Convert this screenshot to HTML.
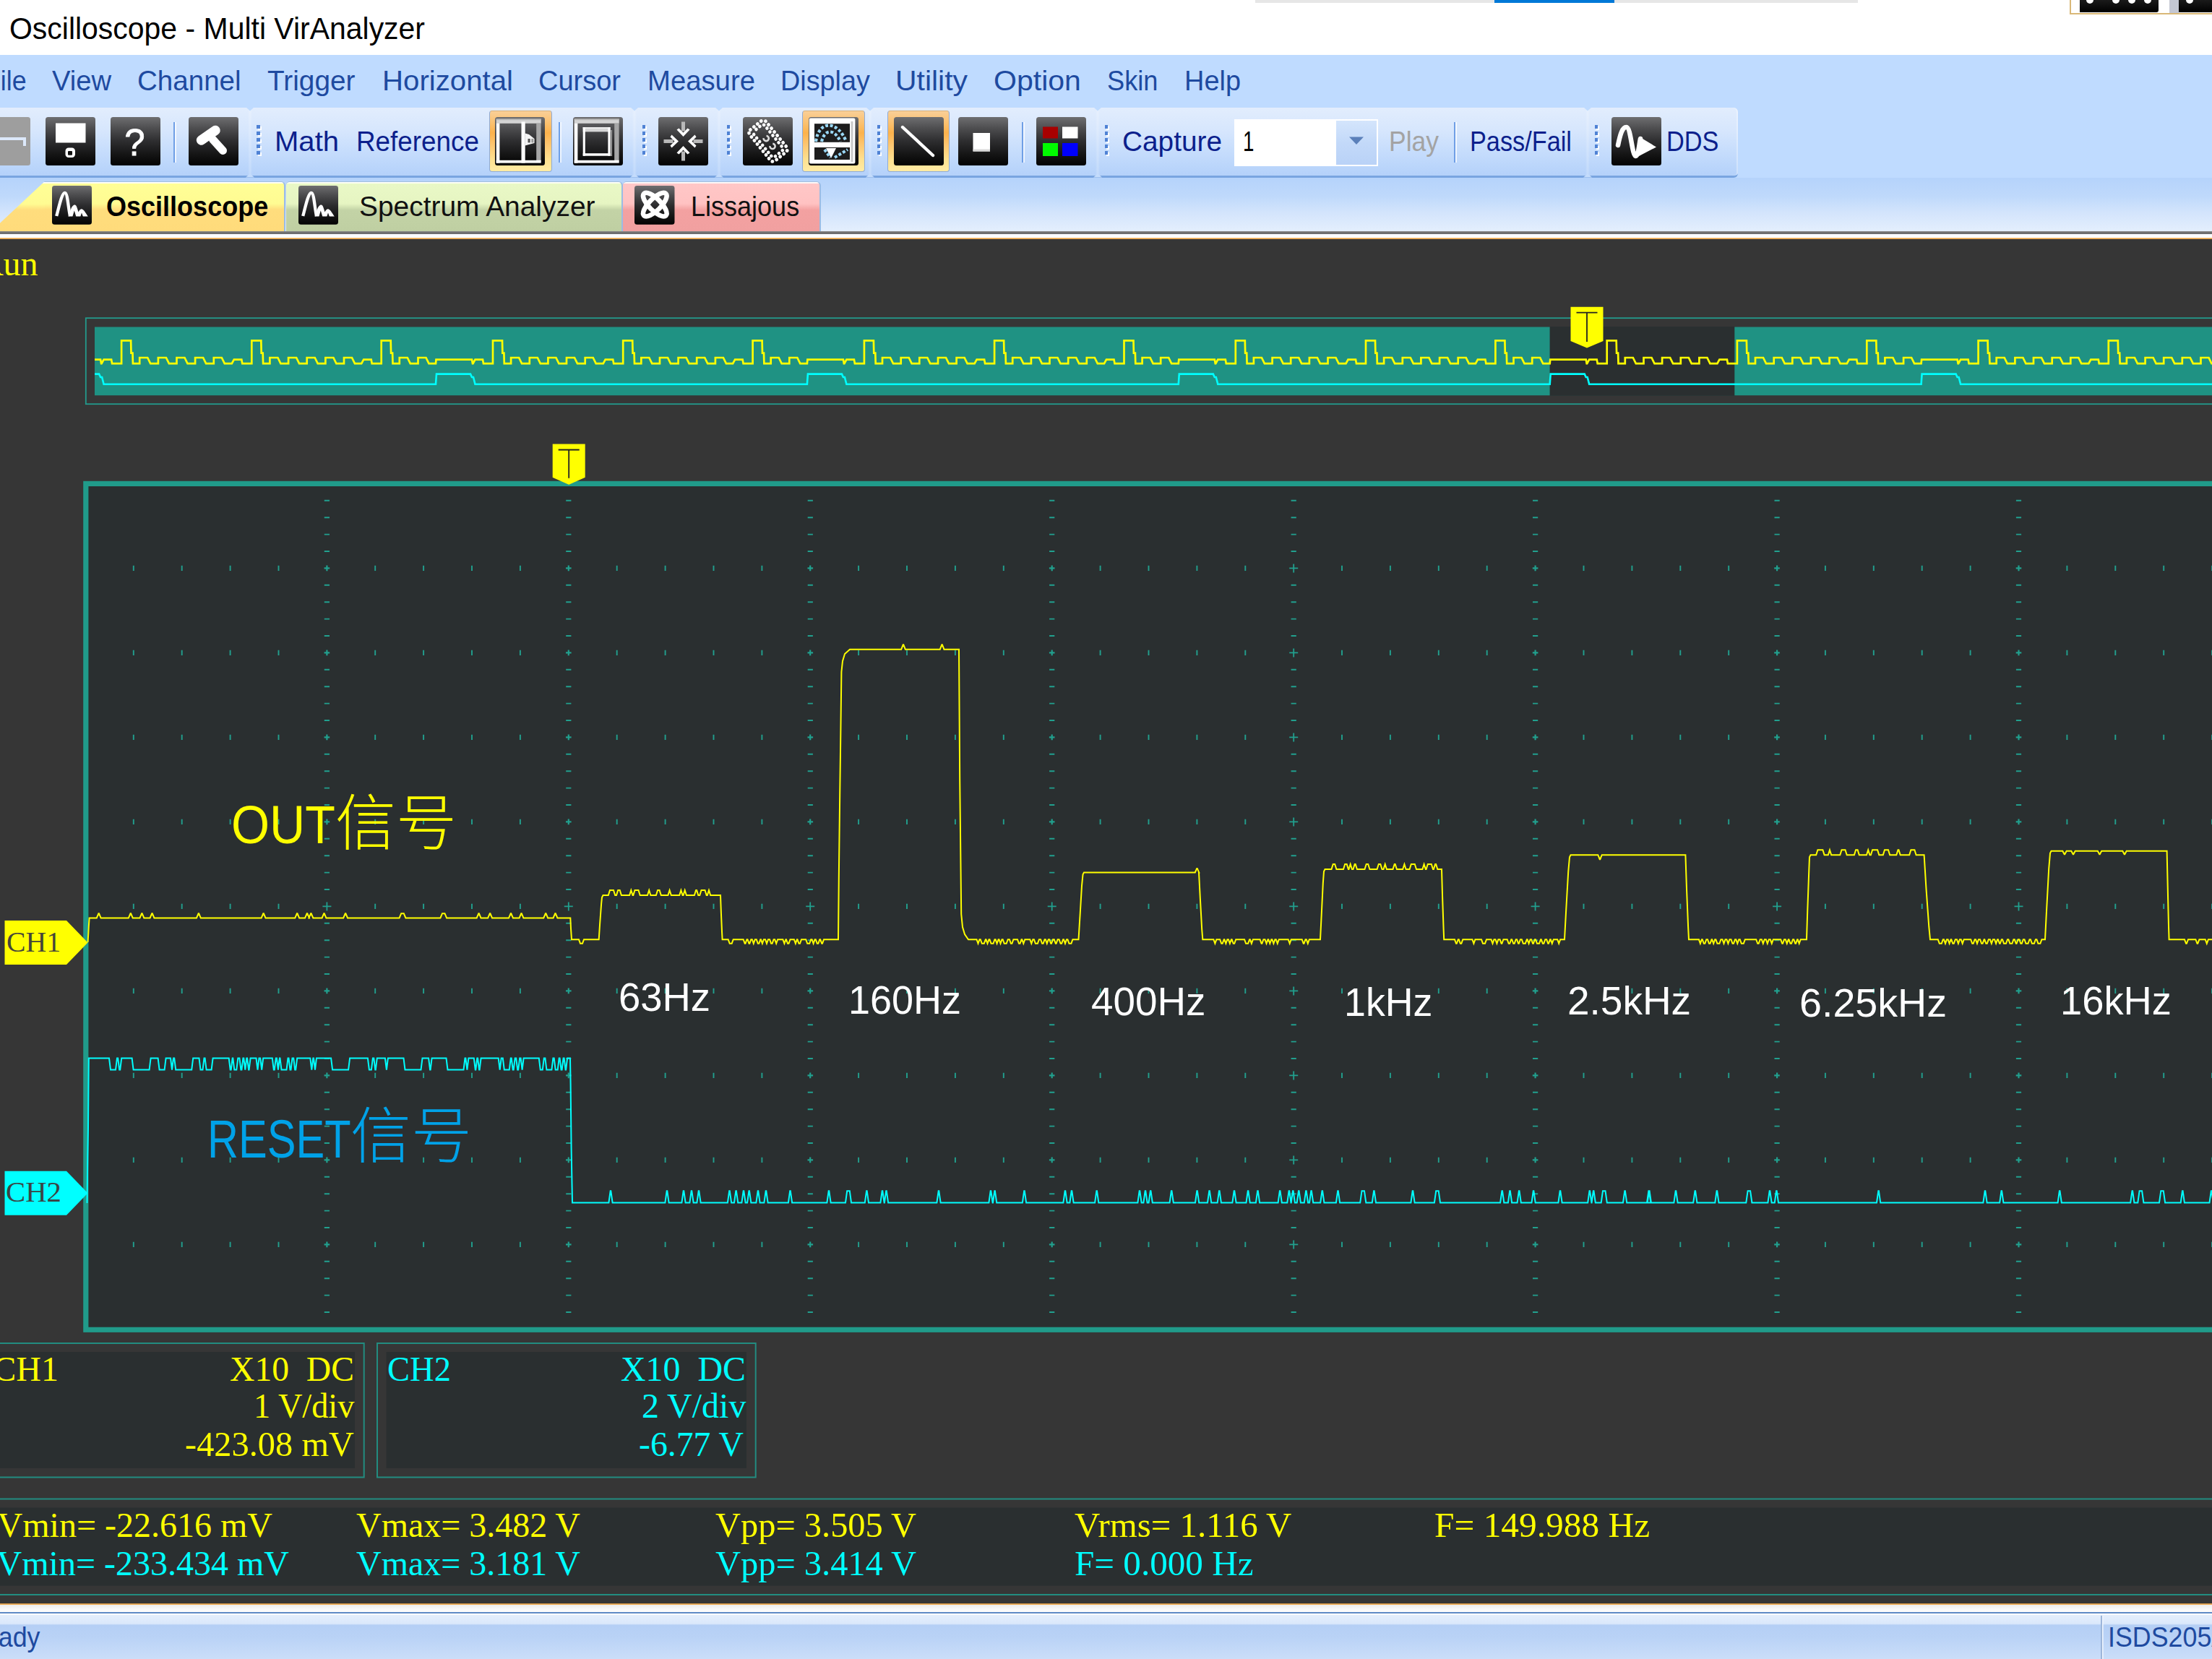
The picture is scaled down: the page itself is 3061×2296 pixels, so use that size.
<!DOCTYPE html><html><head><meta charset="utf-8"><title>Oscilloscope - Multi VirAnalyzer</title><style>
html,body{margin:0;padding:0}
body{width:3061px;height:2296px;overflow:hidden;position:relative;background:#fff;font-family:"Liberation Sans",sans-serif}
.t{position:absolute;white-space:pre;line-height:1;transform-origin:0 0;display:block}
.a{position:absolute}
.grp{position:absolute;top:148.5px;height:94px;border-radius:6px;background:linear-gradient(#e2edfd 0%,#d6e6fd 35%,#c3dbfc 70%,#b4d1fa 100%);border-bottom:3px solid #79a5e0;box-shadow:inset -2px 0 1px rgba(255,255,255,.35)}
.grip{position:absolute;top:173.3px;width:7px;height:46px}
.grip i{position:absolute;left:0;width:4.5px;height:4.5px;background:#4f82d4;box-shadow:2px 2px 0 #fff}
.hot{position:absolute;top:153px;height:85px;border-radius:4px;border:1.5px solid #8eabd8;border-top-color:#d8b078;box-sizing:border-box;background:linear-gradient(#f9cf98 0%,#fbbf6a 22%,#fcb24c 36%,#fdc56f 55%,#fee08f 80%,#ffeba4 100%)}
.sep{position:absolute;top:169px;height:56px;width:2px;background:#6f9fe6;box-shadow:2px 0 0 rgba(255,255,255,.7)}
.ico{position:absolute;width:69px;height:67px}
.tab{position:absolute;top:250.6px;height:69.8px;box-sizing:border-box;border-top:1.8px solid #a3bedb;border-right:2px solid #9bbce4;border-radius:5px 6px 0 0}
</style></head><body>
<div class="a" style="left:0;top:0;width:3061px;height:76px;background:#fff"></div>
<div class="a" style="left:1737px;top:0;width:834px;height:4px;background:#e6e6e6"></div>
<div class="a" style="left:2068px;top:0;width:166px;height:4px;background:#0078d7"></div>
<div class="a" style="left:2864px;top:-2px;width:210px;height:22px;border:2px solid #d9b878;box-sizing:border-box"></div>
<div class="a" style="left:2878px;top:0;width:109px;height:17px;background:linear-gradient(#1a1a1a,#000);border-radius:0 0 3px 0"></div>
<div class="a" style="left:3002px;top:0;width:13px;height:17.5px;background:#c3c7d2"></div>
<div class="a" style="left:3015px;top:0;width:50px;height:17px;background:linear-gradient(#1a1a1a,#000)"></div>
<div class="a" style="left:2887px;top:-5px;width:10px;height:10px;background:#fff;border-radius:3px 3px 5px 5px"></div>
<div class="a" style="left:2923px;top:-5px;width:10px;height:10px;background:#fff;border-radius:3px 3px 5px 5px"></div>
<div class="a" style="left:2944.7px;top:-5px;width:10px;height:10px;background:#fff;border-radius:3px 3px 5px 5px"></div>
<div class="a" style="left:2966.5px;top:-5px;width:10px;height:10px;background:#fff;border-radius:3px 3px 5px 5px"></div>
<div class="a" style="left:3025px;top:-5px;width:10px;height:10px;background:#fff;border-radius:3px 3px 5px 5px"></div>
<span class="t " style="left:13.00px;top:18.30px;font-size:43px;color:#000;font-family:'Liberation Sans',sans-serif;transform:scaleX(0.9523);">Oscilloscope - Multi VirAnalyzer</span>
<div class="a" style="left:0;top:76px;width:3061px;height:172px;background:#bfdbff"></div>
<div class="a" style="left:0;top:246px;width:3061px;height:74px;background:linear-gradient(#b5d3fb 0%,#bfd9fb 35%,#d3e4fc 65%,#e4effd 100%)"></div>
<span class="t " style="left:-21.14px;top:92.81px;font-size:38.5px;color:#1e4aa0;font-family:'Liberation Sans',sans-serif;transform:scaleX(0.9300);">File</span>
<span class="t " style="left:72.40px;top:92.81px;font-size:38.5px;color:#1e4aa0;font-family:'Liberation Sans',sans-serif;transform:scaleX(0.9919);">View</span>
<span class="t " style="left:190.00px;top:92.81px;font-size:38.5px;color:#1e4aa0;font-family:'Liberation Sans',sans-serif;transform:scaleX(1.0013);">Channel</span>
<span class="t " style="left:370.00px;top:92.81px;font-size:38.5px;color:#1e4aa0;font-family:'Liberation Sans',sans-serif;transform:scaleX(1.0083);">Trigger</span>
<span class="t " style="left:529.00px;top:92.81px;font-size:38.5px;color:#1e4aa0;font-family:'Liberation Sans',sans-serif;transform:scaleX(1.0442);">Horizontal</span>
<span class="t " style="left:745.00px;top:92.81px;font-size:38.5px;color:#1e4aa0;font-family:'Liberation Sans',sans-serif;transform:scaleX(0.9870);">Cursor</span>
<span class="t " style="left:895.60px;top:92.81px;font-size:38.5px;color:#1e4aa0;font-family:'Liberation Sans',sans-serif;transform:scaleX(0.9942);">Measure</span>
<span class="t " style="left:1080.00px;top:92.81px;font-size:38.5px;color:#1e4aa0;font-family:'Liberation Sans',sans-serif;transform:scaleX(0.9819);">Display</span>
<span class="t " style="left:1239.00px;top:92.81px;font-size:38.5px;color:#1e4aa0;font-family:'Liberation Sans',sans-serif;transform:scaleX(1.0623);">Utility</span>
<span class="t " style="left:1375.00px;top:92.81px;font-size:38.5px;color:#1e4aa0;font-family:'Liberation Sans',sans-serif;transform:scaleX(1.0663);">Option</span>
<span class="t " style="left:1531.50px;top:92.81px;font-size:38.5px;color:#1e4aa0;font-family:'Liberation Sans',sans-serif;transform:scaleX(0.9415);">Skin</span>
<span class="t " style="left:1638.50px;top:92.81px;font-size:38.5px;color:#1e4aa0;font-family:'Liberation Sans',sans-serif;transform:scaleX(0.9847);">Help</span>
<div class="grp" style="left:-10px;width:2414.5px"></div>
<div class="a" style="left:342.5px;top:149px;width:6px;height:94px;background:linear-gradient(90deg,rgba(255,255,255,0),rgba(255,255,255,.22) 50%,rgba(255,255,255,0))"></div>
<svg class="a" style="left:339.5px;top:148px" width="12" height="100" viewBox="0 0 12 100"><path d="M0 0 H12 L6 5.5 Z" fill="#bfdbff"/><path d="M0 97.5 L6 92.5 L12 97.5 Z" fill="#c4dcfc"/></svg>
<div class="a" style="left:874.5px;top:149px;width:6px;height:94px;background:linear-gradient(90deg,rgba(255,255,255,0),rgba(255,255,255,.22) 50%,rgba(255,255,255,0))"></div>
<svg class="a" style="left:871.5px;top:148px" width="12" height="100" viewBox="0 0 12 100"><path d="M0 0 H12 L6 5.5 Z" fill="#bfdbff"/><path d="M0 97.5 L6 92.5 L12 97.5 Z" fill="#c4dcfc"/></svg>
<div class="a" style="left:992px;top:149px;width:6px;height:94px;background:linear-gradient(90deg,rgba(255,255,255,0),rgba(255,255,255,.22) 50%,rgba(255,255,255,0))"></div>
<svg class="a" style="left:989px;top:148px" width="12" height="100" viewBox="0 0 12 100"><path d="M0 0 H12 L6 5.5 Z" fill="#bfdbff"/><path d="M0 97.5 L6 92.5 L12 97.5 Z" fill="#c4dcfc"/></svg>
<div class="a" style="left:1201px;top:149px;width:6px;height:94px;background:linear-gradient(90deg,rgba(255,255,255,0),rgba(255,255,255,.22) 50%,rgba(255,255,255,0))"></div>
<svg class="a" style="left:1198px;top:148px" width="12" height="100" viewBox="0 0 12 100"><path d="M0 0 H12 L6 5.5 Z" fill="#bfdbff"/><path d="M0 97.5 L6 92.5 L12 97.5 Z" fill="#c4dcfc"/></svg>
<div class="a" style="left:1516px;top:149px;width:6px;height:94px;background:linear-gradient(90deg,rgba(255,255,255,0),rgba(255,255,255,.22) 50%,rgba(255,255,255,0))"></div>
<svg class="a" style="left:1513px;top:148px" width="12" height="100" viewBox="0 0 12 100"><path d="M0 0 H12 L6 5.5 Z" fill="#bfdbff"/><path d="M0 97.5 L6 92.5 L12 97.5 Z" fill="#c4dcfc"/></svg>
<div class="a" style="left:2193.5px;top:149px;width:6px;height:94px;background:linear-gradient(90deg,rgba(255,255,255,0),rgba(255,255,255,.22) 50%,rgba(255,255,255,0))"></div>
<svg class="a" style="left:2190.5px;top:148px" width="12" height="100" viewBox="0 0 12 100"><path d="M0 0 H12 L6 5.5 Z" fill="#bfdbff"/><path d="M0 97.5 L6 92.5 L12 97.5 Z" fill="#c4dcfc"/></svg>
<div class="grip" style="left:355px"><i style="top:0.0px"></i><i style="top:9.0px"></i><i style="top:18.1px"></i><i style="top:27.1px"></i><i style="top:36.2px"></i></div>
<div class="grip" style="left:888.5px"><i style="top:0.0px"></i><i style="top:9.0px"></i><i style="top:18.1px"></i><i style="top:27.1px"></i><i style="top:36.2px"></i></div>
<div class="grip" style="left:1005.5px"><i style="top:0.0px"></i><i style="top:9.0px"></i><i style="top:18.1px"></i><i style="top:27.1px"></i><i style="top:36.2px"></i></div>
<div class="grip" style="left:1213.5px"><i style="top:0.0px"></i><i style="top:9.0px"></i><i style="top:18.1px"></i><i style="top:27.1px"></i><i style="top:36.2px"></i></div>
<div class="grip" style="left:1528.5px"><i style="top:0.0px"></i><i style="top:9.0px"></i><i style="top:18.1px"></i><i style="top:27.1px"></i><i style="top:36.2px"></i></div>
<div class="grip" style="left:2206.5px"><i style="top:0.0px"></i><i style="top:9.0px"></i><i style="top:18.1px"></i><i style="top:27.1px"></i><i style="top:36.2px"></i></div>
<div class="hot" style="left:676.5px;width:87.5px"></div>
<div class="hot" style="left:1109.7px;width:87.29999999999995px"></div>
<div class="hot" style="left:1228px;width:86px"></div>
<div class="sep" style="left:240px"></div>
<div class="sep" style="left:772.5px"></div>
<div class="sep" style="left:1414px"></div>
<div class="sep" style="left:2011.5px"></div>
<span class="t " style="left:380.00px;top:176.51px;font-size:38.5px;color:#0c1f8c;font-family:'Liberation Sans',sans-serif;transform:scaleX(1.0401);">Math</span>
<span class="t " style="left:493.00px;top:176.51px;font-size:38.5px;color:#0c1f8c;font-family:'Liberation Sans',sans-serif;transform:scaleX(0.9568);">Reference</span>
<span class="t " style="left:1553.00px;top:176.51px;font-size:38.5px;color:#0c1f8c;font-family:'Liberation Sans',sans-serif;transform:scaleX(1.0076);">Capture</span>
<span class="t " style="left:1922.00px;top:176.51px;font-size:38.5px;color:#a3a3a3;font-family:'Liberation Sans',sans-serif;transform:scaleX(0.9214);">Play</span>
<span class="t " style="left:2033.70px;top:176.51px;font-size:38.5px;color:#0c1f8c;font-family:'Liberation Sans',sans-serif;transform:scaleX(0.8905);">Pass/Fail</span>
<span class="t " style="left:2305.50px;top:176.51px;font-size:38.5px;color:#0c1f8c;font-family:'Liberation Sans',sans-serif;transform:scaleX(0.8914);">DDS</span>
<div class="a" style="left:1708px;top:164.5px;width:199px;height:65px;background:#fff"></div>
<div class="a" style="left:1849px;top:166.5px;width:56px;height:61px;background:linear-gradient(#d4e5fc,#c3d9f9 50%,#b9d2f7)"></div>
<svg class="a" style="left:1865px;top:188px" width="24" height="14" viewBox="0 0 24 14"><path d="M2 1.5 L22 1.5 L12 12 Z" fill="#5b80ba"/></svg>
<span class="t " style="left:1720.00px;top:176.51px;font-size:38.5px;color:#000;font-family:'Liberation Sans',sans-serif;transform:scaleX(0.7200);">1</span>
<svg width="0" height="0" style="position:absolute"><defs>
<linearGradient id="ig" x1="0" y1="0" x2="0" y2="1"><stop offset="0" stop-color="#6e6e70"/><stop offset=".25" stop-color="#4b4b4d"/><stop offset=".5" stop-color="#2d2d2f"/><stop offset=".78" stop-color="#141414"/><stop offset="1" stop-color="#030303"/></linearGradient>
<linearGradient id="igg" x1="0" y1="0" x2="0" y2="1"><stop offset="0" stop-color="#a2a2a2"/><stop offset="1" stop-color="#9a9a9a"/></linearGradient>
</defs></svg>
<svg class="a" style="left:-27.5px;top:162px" width="69" height="67" viewBox="0 0 69 67"><rect x="0" y="0" width="69" height="67" rx="3.5" fill="#9e9e9e"/><path d="M22 30 H61 V40" fill="none" stroke="#dce8fa" stroke-width="4"/><path d="M22 22 V30" stroke="#dce8fa" stroke-width="4"/></svg>
<svg class="a" style="left:62.5px;top:162px" width="69" height="67" viewBox="0 0 69 67"><rect x="0" y="0" width="69" height="67" rx="3.5" fill="url(#ig)"/><rect x="14" y="8.5" width="41.5" height="27" fill="#fff"/><rect x="27.5" y="42.5" width="13.5" height="13.5" rx="4.5" fill="#fff"/><rect x="31" y="47" width="6" height="5.8" rx="1" fill="#111"/></svg>
<svg class="a" style="left:153px;top:162px" width="69" height="67" viewBox="0 0 69 67"><rect x="0" y="0" width="69" height="67" rx="3.5" fill="url(#ig)"/><text x="33.5" y="53" font-family="Liberation Sans,sans-serif" font-size="51" fill="#fff" stroke="#fff" stroke-width="0.8" text-anchor="middle">?</text></svg>
<svg class="a" style="left:261px;top:162px" width="69" height="67" viewBox="0 0 69 67"><rect x="0" y="0" width="69" height="67" rx="3.5" fill="url(#ig)"/><path d="M17.5 32 L37 18.5" stroke="#fff" stroke-width="13.5" stroke-linecap="round"/><path d="M13 36 L24 36 L20 28 Z" fill="#fff"/><path d="M33.5 31 L47.5 46.5" stroke="#fff" stroke-width="11" stroke-linecap="round"/></svg>
<svg class="a" style="left:685.3px;top:162px" width="69" height="67" viewBox="0 0 69 67"><rect x="0" y="0" width="69" height="67" rx="3.5" fill="url(#ig)"/><rect x="1.7" y="2.6" width="62" height="6.2" fill="#d4d4d4"/><rect x="1.7" y="2.6" width="62" height="1.6" fill="#b9b9b9"/><rect x="57.2" y="8.6" width="6.4" height="52" fill="#a6a6a6"/><rect x="1.7" y="8.6" width="4.7" height="55" fill="#fff"/><rect x="1.7" y="59.8" width="62" height="3.8" fill="#fff"/><rect x="36.5" y="6.5" width="5.2" height="57" fill="#fff"/><path d="M41.5 22.5 L47 24 L54.5 30 V36 L47 38 L41.5 39.5 Z" fill="#f4f4f4"/><rect x="45.5" y="30" width="3.2" height="5.4" fill="#555"/><rect x="50.3" y="30" width="3" height="5.4" fill="#999"/></svg>
<svg class="a" style="left:793.3px;top:162px" width="69" height="67" viewBox="0 0 69 67"><rect x="0" y="0" width="69" height="67" rx="3.5" fill="url(#ig)"/><rect x="1.7" y="2.6" width="62" height="6.2" fill="#d4d4d4"/><rect x="1.7" y="2.6" width="62" height="1.6" fill="#b9b9b9"/><rect x="57.2" y="8.6" width="6.4" height="52" fill="#a6a6a6"/><rect x="1.7" y="8.6" width="4.7" height="55" fill="#fff"/><rect x="1.7" y="59.8" width="62" height="3.8" fill="#fff"/><rect x="51.5" y="18" width="2.6" height="36" fill="#8f8f8f"/><rect x="13.7" y="14.2" width="37.8" height="6.2" fill="#d6d6d6"/><rect x="13.7" y="14.2" width="37.8" height="1.6" fill="#f4f4f4"/><rect x="13.7" y="14.2" width="3.1" height="39.5" fill="#fff"/><rect x="48.4" y="14.2" width="3.1" height="39.5" fill="#fff"/><rect x="13.7" y="50.2" width="37.8" height="3.5" fill="#fff"/></svg>
<svg class="a" style="left:911px;top:162px" width="69" height="67" viewBox="0 0 69 67"><rect x="0" y="0" width="69" height="67" rx="3.5" fill="url(#ig)"/><g transform="rotate(0 34.5 33.5)"><rect x="32" y="6.5" width="5" height="13" fill="#b9b9b9"/><path d="M25.5 17.5 L34.5 27 L43.5 17.5 L40.5 15.5 L34.5 21.5 L28.5 15.5 Z" fill="#fff"/></g><g transform="rotate(90 34.5 33.5)"><rect x="32" y="6.5" width="5" height="13" fill="#b9b9b9"/><path d="M25.5 17.5 L34.5 27 L43.5 17.5 L40.5 15.5 L34.5 21.5 L28.5 15.5 Z" fill="#fff"/></g><g transform="rotate(180 34.5 33.5)"><rect x="32" y="6.5" width="5" height="13" fill="#b9b9b9"/><path d="M25.5 17.5 L34.5 27 L43.5 17.5 L40.5 15.5 L34.5 21.5 L28.5 15.5 Z" fill="#fff"/></g><g transform="rotate(270 34.5 33.5)"><rect x="32" y="6.5" width="5" height="13" fill="#b9b9b9"/><path d="M25.5 17.5 L34.5 27 L43.5 17.5 L40.5 15.5 L34.5 21.5 L28.5 15.5 Z" fill="#fff"/></g></svg>
<svg class="a" style="left:1028px;top:162px" width="69" height="67" viewBox="0 0 69 67"><rect x="0" y="0" width="69" height="67" rx="3.5" fill="url(#ig)"/><g transform="translate(35 33) rotate(-39)" fill="none" stroke="#fff"><rect x="-14.5" y="-27.5" width="29" height="55" rx="5" stroke-width="4.8" stroke-dasharray="0.1 6.3" stroke-linecap="round"/><rect x="-9.8" y="-22.8" width="19.6" height="45.6" rx="3.5" stroke-width="4.6" stroke-dasharray="0.1 6.3" stroke-dashoffset="3" stroke-linecap="round"/><path d="M-2.5 -7 a3.6 3.6 0 1 0 5 0 M-2.5 7 a3.6 3.6 0 1 0 5 0" stroke-width="2.6" stroke="#ddd"/></g></svg>
<svg class="a" style="left:1119px;top:162px" width="69" height="67" viewBox="0 0 69 67"><rect x="0" y="0" width="69" height="67" rx="3.5" fill="url(#ig)"/><rect x="0.8" y="1.5" width="63.6" height="63" rx="2" fill="#fff"/><rect x="58.5" y="6" width="3" height="56" fill="#c9c9c9"/><rect x="8" y="9.2" width="49" height="25.6" fill="#1d1d1d"/><rect x="8" y="42" width="49" height="17" fill="#1d1d1d"/><path d="M10 34 C14 4 40 4 52 34 M18 34 C22 16 36 16 44 34" fill="none" stroke="#9ad8f6" stroke-width="4.2" stroke-dasharray="4 2.6"/><path d="M24 43 L31 57 L38 43 Z" fill="#fff"/><path d="M36 56 L54 45 M22 45 L30 56" stroke="#9ad8f6" stroke-width="4" stroke-dasharray="4 2.5"/></svg>
<svg class="a" style="left:1236.5px;top:162px" width="69" height="67" viewBox="0 0 69 67"><rect x="0" y="0" width="69" height="67" rx="3.5" fill="url(#ig)"/><path d="M12 14 L54 53" stroke="#fff" stroke-width="4.4" stroke-linecap="round"/></svg>
<svg class="a" style="left:1326px;top:162px" width="69" height="67" viewBox="0 0 69 67"><rect x="0" y="0" width="69" height="67" rx="3.5" fill="url(#ig)"/><rect x="20.5" y="22" width="23.5" height="25.5" fill="#fff"/><rect x="20.5" y="44.5" width="23.5" height="3" fill="#d9d9d9"/></svg>
<svg class="a" style="left:1434px;top:162px" width="69" height="67" viewBox="0 0 69 67"><rect x="0" y="0" width="69" height="67" rx="3.5" fill="url(#ig)"/><rect x="9" y="13.5" width="21" height="16" fill="#a80000"/><rect x="36" y="13.5" width="21.5" height="16" fill="#fff"/><rect x="9" y="36" width="21" height="18" fill="#00fb00"/><rect x="36" y="36" width="21.5" height="18" fill="#0000fd"/></svg>
<svg class="a" style="left:2229.5px;top:162px" width="69" height="67" viewBox="0 0 69 67"><rect x="0" y="0" width="69" height="67" rx="3.5" fill="url(#ig)"/><path d="M9 39 C12 24 15 14 20.5 14 C27 14 28 52 33.5 54 C37 54 38 40 40 30" fill="none" stroke="#fff" stroke-width="6.5" stroke-linecap="round"/><path d="M38 27 L62 41.5 L38 54 Z" fill="#fff"/></svg>
<div class="tab" style="left:-13px;width:200px;background:linear-gradient(#fff 0,#fffff0 1.6px,#fffe96 2px,#fffb92 44%,#ffdd7d 56%,#ffdb7b 100%);transform:skewX(-47deg);transform-origin:0 100%;border-radius:0;border-right:none"></div>
<div class="tab" style="left:62px;width:333px;background:linear-gradient(#fff 0,#fffff0 1.6px,#fffe96 2px,#fffb92 44%,#ffdd7d 56%,#ffdb7b 100%);border-left:none;border-radius:0 6px 0 0"></div>
<div class="tab" style="left:396px;width:466px;background:linear-gradient(#fff 0,#fbfff0 1.6px,#e9f8c6 2px,#e6f5c2 44%,#c3d3a6 57%,#bfcfa2 100%)"></div>
<div class="tab" style="left:862px;width:273.5px;background:linear-gradient(#fff 0,#fff4f4 1.6px,#ffc7c7 2px,#ffc2c2 44%,#f3a1a1 57%,#f1a0a0 100%)"></div>
<svg class="a" style="left:72px;top:257px" width="55" height="53.7" viewBox="0 0 55 53.7"><rect x="0" y="0" width="55" height="53.7" rx="3.5" fill="url(#ig)"/><path d="M6.2 42 C9.5 30 13.5 9.8 17.8 9.8 C21.5 9.8 22.5 31 25 42" fill="none" stroke="#fff" stroke-width="4.3" stroke-linecap="butt" stroke-linejoin="round"/><path d="M22.5 42.6 L25.5 34 C27.5 28 30 26 31.8 26.5 C34.3 27.2 35.3 33 36.6 36.5 C38 33 40 32 41.6 32.4 C44.2 33.2 47 38 49.8 42.6 Z" fill="#fff"/><path d="M28.3 43 L30.8 34.5 L33.4 43 Z M39.2 43 L41 37.5 L43 43 Z" fill="#1c1c1c"/></svg>
<svg class="a" style="left:413px;top:257px" width="55" height="53.7" viewBox="0 0 55 53.7"><rect x="0" y="0" width="55" height="53.7" rx="3.5" fill="url(#ig)"/><path d="M6.2 42 C9.5 30 13.5 9.8 17.8 9.8 C21.5 9.8 22.5 31 25 42" fill="none" stroke="#fff" stroke-width="4.3" stroke-linecap="butt" stroke-linejoin="round"/><path d="M22.5 42.6 L25.5 34 C27.5 28 30 26 31.8 26.5 C34.3 27.2 35.3 33 36.6 36.5 C38 33 40 32 41.6 32.4 C44.2 33.2 47 38 49.8 42.6 Z" fill="#fff"/><path d="M28.3 43 L30.8 34.5 L33.4 43 Z M39.2 43 L41 37.5 L43 43 Z" fill="#1c1c1c"/></svg>
<svg class="a" style="left:878px;top:257px" width="55.5" height="53.7" viewBox="0 0 55.5 53.7"><rect x="0" y="0" width="55.5" height="53.7" rx="3.5" fill="url(#ig)"/><g fill="none" stroke="#fff" stroke-width="6.6"><ellipse cx="28.3" cy="26.2" rx="21.5" ry="8.2" transform="rotate(45 28.3 26.2)"/><ellipse cx="28.3" cy="26.2" rx="21.5" ry="8.2" transform="rotate(-45 28.3 26.2)"/></g></svg>
<span class="t " style="left:146.50px;top:266.81px;font-size:38.5px;color:#000;font-family:'Liberation Sans',sans-serif;transform:scaleX(0.9355);font-weight:bold;">Oscilloscope</span>
<span class="t " style="left:496.50px;top:266.81px;font-size:38.5px;color:#111;font-family:'Liberation Sans',sans-serif;transform:scaleX(1.0105);">Spectrum Analyzer</span>
<span class="t " style="left:955.80px;top:266.81px;font-size:38.5px;color:#111;font-family:'Liberation Sans',sans-serif;transform:scaleX(0.9356);">Lissajous</span>
<div class="a" style="left:0;top:320.3px;width:3061px;height:4px;background:linear-gradient(#8d8d8d,#6b6b6b 50%,#707070)"></div>
<div class="a" style="left:0;top:324px;width:3061px;height:5px;background:#fbfcff"></div>
<div class="a" style="left:0;top:328.5px;width:3061px;height:2.8px;background:linear-gradient(#fdd9a0,#fbb04e 50%,#c08a44)"></div>
<div class="a" style="left:0;top:331px;width:3061px;height:1888px;background:#363636"></div>
<svg class="a" style="left:0;top:0" width="3061" height="2296" viewBox="0 0 3061 2296" shape-rendering="auto">
<rect x="118.8" y="440.2" width="3000" height="119" fill="none" stroke="#239a8c" stroke-width="1.8"/>
<rect x="131" y="452.5" width="2940" height="94.7" fill="#1f9283"/>
<rect x="2144.6" y="452" width="255.7" height="95.7" fill="#2a2f30"/>
<clipPath id="ovc"><rect x="131" y="452.5" width="2940" height="94.7"/></clipPath>
<g clip-path="url(#ovc)">
<path d="M-424.8 503.2 L-424.3 497.6 L-374.8 497.6 L-373.8 503.2 L-373.3 503.2 L-370.3 497.6 L-359.8 497.6 L-358.8 503.2 L-345.8 503.2 L-345.8 471.3 L-332.8 471.3 L-332.4 488.7 L-330.4 488.7 L-330.0 503.2 L-320.7 503.2 L-320.7 495.0 L-309.7 495.0 L-305.7 503.2 L-295.0 503.2 L-295.0 495.0 L-284.0 495.0 L-280.0 503.2 L-269.4 503.2 L-269.4 495.0 L-258.4 495.0 L-254.4 503.2 L-243.7 503.2 L-243.7 495.0 L-232.7 495.0 L-228.7 503.2 L-218.1 503.2 L-218.1 495.0 L-207.1 495.0 L-203.1 503.2 L-193.1 503.2 L-190.1 497.6 L-179.6 497.6 L-178.6 503.2 L-165.6 503.2 L-165.6 471.3 L-152.6 471.3 L-152.2 488.7 L-150.2 488.7 L-149.8 503.2 L-140.5 503.2 L-140.5 495.0 L-129.5 495.0 L-125.5 503.2 L-114.8 503.2 L-114.8 495.0 L-103.8 495.0 L-99.8 503.2 L-89.2 503.2 L-89.2 495.0 L-78.2 495.0 L-74.2 503.2 L-63.5 503.2 L-63.5 495.0 L-52.5 495.0 L-48.5 503.2 L-37.9 503.2 L-37.9 495.0 L-26.9 495.0 L-22.9 503.2 L-13.7 503.2 L-10.7 497.6 L-0.2 497.6 L0.8 503.2 L13.8 503.2 L13.8 471.3 L26.8 471.3 L27.2 488.7 L29.2 488.7 L29.6 503.2 L38.9 503.2 L38.9 495.0 L49.9 495.0 L53.9 503.2 L64.6 503.2 L64.6 495.0 L75.6 495.0 L79.6 503.2 L89.1 503.2 L89.1 503.2 L89.6 497.6 L139.1 497.6 L140.1 503.2 L140.6 503.2 L143.6 497.6 L154.1 497.6 L155.1 503.2 L168.1 503.2 L168.1 471.3 L181.1 471.3 L181.5 488.7 L183.5 488.7 L183.9 503.2 L193.2 503.2 L193.2 495.0 L204.2 495.0 L208.2 503.2 L218.9 503.2 L218.9 495.0 L229.9 495.0 L233.9 503.2 L244.5 503.2 L244.5 495.0 L255.5 495.0 L259.5 503.2 L270.1 503.2 L270.1 495.0 L281.1 495.0 L285.1 503.2 L295.8 503.2 L295.8 495.0 L306.8 495.0 L310.8 503.2 L320.8 503.2 L323.8 497.6 L334.3 497.6 L335.3 503.2 L348.3 503.2 L348.3 471.3 L361.3 471.3 L361.7 488.7 L363.7 488.7 L364.1 503.2 L373.4 503.2 L373.4 495.0 L384.4 495.0 L388.4 503.2 L399.1 503.2 L399.1 495.0 L410.1 495.0 L414.1 503.2 L424.7 503.2 L424.7 495.0 L435.7 495.0 L439.7 503.2 L450.4 503.2 L450.4 495.0 L461.4 495.0 L465.4 503.2 L476.0 503.2 L476.0 495.0 L487.0 495.0 L491.0 503.2 L500.2 503.2 L503.2 497.6 L513.7 497.6 L514.7 503.2 L527.7 503.2 L527.7 471.3 L540.7 471.3 L541.1 488.7 L543.1 488.7 L543.5 503.2 L552.8 503.2 L552.8 495.0 L563.8 495.0 L567.8 503.2 L578.5 503.2 L578.5 495.0 L589.5 495.0 L593.5 503.2 L603.0 503.2 L603.0 503.2 L603.5 497.6 L653.0 497.6 L654.0 503.2 L654.5 503.2 L657.5 497.6 L668.0 497.6 L669.0 503.2 L682.0 503.2 L682.0 471.3 L695.0 471.3 L695.4 488.7 L697.4 488.7 L697.8 503.2 L707.1 503.2 L707.1 495.0 L718.1 495.0 L722.1 503.2 L732.8 503.2 L732.8 495.0 L743.8 495.0 L747.8 503.2 L758.4 503.2 L758.4 495.0 L769.4 495.0 L773.4 503.2 L784.0 503.2 L784.0 495.0 L795.0 495.0 L799.0 503.2 L809.7 503.2 L809.7 495.0 L820.7 495.0 L824.7 503.2 L834.7 503.2 L837.7 497.6 L848.2 497.6 L849.2 503.2 L862.2 503.2 L862.2 471.3 L875.2 471.3 L875.6 488.7 L877.6 488.7 L878.0 503.2 L887.3 503.2 L887.3 495.0 L898.3 495.0 L902.3 503.2 L913.0 503.2 L913.0 495.0 L924.0 495.0 L928.0 503.2 L938.6 503.2 L938.6 495.0 L949.6 495.0 L953.6 503.2 L964.2 503.2 L964.2 495.0 L975.2 495.0 L979.2 503.2 L989.9 503.2 L989.9 495.0 L1000.9 495.0 L1004.9 503.2 L1014.1 503.2 L1017.1 497.6 L1027.6 497.6 L1028.6 503.2 L1041.6 503.2 L1041.6 471.3 L1054.6 471.3 L1055.0 488.7 L1057.0 488.7 L1057.4 503.2 L1066.7 503.2 L1066.7 495.0 L1077.7 495.0 L1081.7 503.2 L1092.3 503.2 L1092.3 495.0 L1103.3 495.0 L1107.3 503.2 L1116.9 503.2 L1116.9 503.2 L1117.4 497.6 L1166.9 497.6 L1167.9 503.2 L1168.4 503.2 L1171.4 497.6 L1181.9 497.6 L1182.9 503.2 L1195.9 503.2 L1195.9 471.3 L1208.9 471.3 L1209.3 488.7 L1211.3 488.7 L1211.7 503.2 L1221.0 503.2 L1221.0 495.0 L1232.0 495.0 L1236.0 503.2 L1246.7 503.2 L1246.7 495.0 L1257.7 495.0 L1261.7 503.2 L1272.3 503.2 L1272.3 495.0 L1283.3 495.0 L1287.3 503.2 L1298.0 503.2 L1298.0 495.0 L1309.0 495.0 L1313.0 503.2 L1323.6 503.2 L1323.6 495.0 L1334.6 495.0 L1338.6 503.2 L1348.6 503.2 L1351.6 497.6 L1362.1 497.6 L1363.1 503.2 L1376.1 503.2 L1376.1 471.3 L1389.1 471.3 L1389.5 488.7 L1391.5 488.7 L1391.9 503.2 L1401.2 503.2 L1401.2 495.0 L1412.2 495.0 L1416.2 503.2 L1426.9 503.2 L1426.9 495.0 L1437.9 495.0 L1441.9 503.2 L1452.5 503.2 L1452.5 495.0 L1463.5 495.0 L1467.5 503.2 L1478.2 503.2 L1478.2 495.0 L1489.2 495.0 L1493.2 503.2 L1503.8 503.2 L1503.8 495.0 L1514.8 495.0 L1518.8 503.2 L1528.0 503.2 L1531.0 497.6 L1541.5 497.6 L1542.5 503.2 L1555.5 503.2 L1555.5 471.3 L1568.5 471.3 L1568.9 488.7 L1570.9 488.7 L1571.3 503.2 L1580.6 503.2 L1580.6 495.0 L1591.6 495.0 L1595.6 503.2 L1606.2 503.2 L1606.2 495.0 L1617.2 495.0 L1621.2 503.2 L1630.8 503.2 L1630.8 503.2 L1631.3 497.6 L1680.8 497.6 L1681.8 503.2 L1682.3 503.2 L1685.3 497.6 L1695.8 497.6 L1696.8 503.2 L1709.8 503.2 L1709.8 471.3 L1722.8 471.3 L1723.2 488.7 L1725.2 488.7 L1725.6 503.2 L1734.9 503.2 L1734.9 495.0 L1745.9 495.0 L1749.9 503.2 L1760.6 503.2 L1760.6 495.0 L1771.6 495.0 L1775.6 503.2 L1786.2 503.2 L1786.2 495.0 L1797.2 495.0 L1801.2 503.2 L1811.9 503.2 L1811.9 495.0 L1822.9 495.0 L1826.9 503.2 L1837.5 503.2 L1837.5 495.0 L1848.5 495.0 L1852.5 503.2 L1862.5 503.2 L1865.5 497.6 L1876.0 497.6 L1877.0 503.2 L1890.0 503.2 L1890.0 471.3 L1903.0 471.3 L1903.4 488.7 L1905.4 488.7 L1905.8 503.2 L1915.1 503.2 L1915.1 495.0 L1926.1 495.0 L1930.1 503.2 L1940.8 503.2 L1940.8 495.0 L1951.8 495.0 L1955.8 503.2 L1966.4 503.2 L1966.4 495.0 L1977.4 495.0 L1981.4 503.2 L1992.1 503.2 L1992.1 495.0 L2003.1 495.0 L2007.1 503.2 L2017.7 503.2 L2017.7 495.0 L2028.7 495.0 L2032.7 503.2 L2041.9 503.2 L2044.9 497.6 L2055.4 497.6 L2056.4 503.2 L2069.4 503.2 L2069.4 471.3 L2082.4 471.3 L2082.8 488.7 L2084.8 488.7 L2085.2 503.2 L2094.5 503.2 L2094.5 495.0 L2105.5 495.0 L2109.5 503.2 L2120.2 503.2 L2120.2 495.0 L2131.2 495.0 L2135.2 503.2 L2144.7 503.2 L2144.7 503.2 L2145.2 497.6 L2194.7 497.6 L2195.7 503.2 L2196.2 503.2 L2199.2 497.6 L2209.7 497.6 L2210.7 503.2 L2223.7 503.2 L2223.7 471.3 L2236.7 471.3 L2237.1 488.7 L2239.1 488.7 L2239.5 503.2 L2248.8 503.2 L2248.8 495.0 L2259.8 495.0 L2263.8 503.2 L2274.5 503.2 L2274.5 495.0 L2285.5 495.0 L2289.5 503.2 L2300.1 503.2 L2300.1 495.0 L2311.1 495.0 L2315.1 503.2 L2325.8 503.2 L2325.8 495.0 L2336.8 495.0 L2340.8 503.2 L2351.4 503.2 L2351.4 495.0 L2362.4 495.0 L2366.4 503.2 L2376.4 503.2 L2379.4 497.6 L2389.9 497.6 L2390.9 503.2 L2403.9 503.2 L2403.9 471.3 L2416.9 471.3 L2417.3 488.7 L2419.3 488.7 L2419.7 503.2 L2429.0 503.2 L2429.0 495.0 L2440.0 495.0 L2444.0 503.2 L2454.7 503.2 L2454.7 495.0 L2465.7 495.0 L2469.7 503.2 L2480.3 503.2 L2480.3 495.0 L2491.3 495.0 L2495.3 503.2 L2505.9 503.2 L2505.9 495.0 L2516.9 495.0 L2520.9 503.2 L2531.6 503.2 L2531.6 495.0 L2542.6 495.0 L2546.6 503.2 L2555.8 503.2 L2558.8 497.6 L2569.3 497.6 L2570.3 503.2 L2583.3 503.2 L2583.3 471.3 L2596.3 471.3 L2596.7 488.7 L2598.7 488.7 L2599.1 503.2 L2608.4 503.2 L2608.4 495.0 L2619.4 495.0 L2623.4 503.2 L2634.1 503.2 L2634.1 495.0 L2645.1 495.0 L2649.1 503.2 L2658.6 503.2 L2658.6 503.2 L2659.1 497.6 L2708.6 497.6 L2709.6 503.2 L2710.1 503.2 L2713.1 497.6 L2723.6 497.6 L2724.6 503.2 L2737.6 503.2 L2737.6 471.3 L2750.6 471.3 L2751.0 488.7 L2753.0 488.7 L2753.4 503.2 L2762.7 503.2 L2762.7 495.0 L2773.7 495.0 L2777.7 503.2 L2788.4 503.2 L2788.4 495.0 L2799.4 495.0 L2803.4 503.2 L2814.0 503.2 L2814.0 495.0 L2825.0 495.0 L2829.0 503.2 L2839.7 503.2 L2839.7 495.0 L2850.7 495.0 L2854.7 503.2 L2865.3 503.2 L2865.3 495.0 L2876.3 495.0 L2880.3 503.2 L2890.3 503.2 L2893.3 497.6 L2903.8 497.6 L2904.8 503.2 L2917.8 503.2 L2917.8 471.3 L2930.8 471.3 L2931.2 488.7 L2933.2 488.7 L2933.6 503.2 L2942.9 503.2 L2942.9 495.0 L2953.9 495.0 L2957.9 503.2 L2968.6 503.2 L2968.6 495.0 L2979.6 495.0 L2983.6 503.2 L2994.2 503.2 L2994.2 495.0 L3005.2 495.0 L3009.2 503.2 L3019.8 503.2 L3019.8 495.0 L3030.8 495.0 L3034.8 503.2 L3045.5 503.2 L3045.5 495.0 L3056.5 495.0 L3060.5 503.2 L3069.7 503.2 L3072.7 497.6 L3083.2 497.6 L3084.2 503.2 L3097.2 503.2 L3097.2 471.3 L3110.2 471.3 L3110.6 488.7 L3112.6 488.7 L3113.0 503.2 L3122.3 503.2 L3122.3 495.0 L3133.3 495.0 L3137.3 503.2 L3148.0 503.2 L3148.0 495.0 L3159.0 495.0 L3163.0 503.2 L3172.5 503.2" fill="none" stroke="#ffff00" stroke-width="2.7" stroke-linejoin="miter" />
<path d="M-424.8 531.8 L-423.8 517.6 L-376.8 517.6 L-374.8 522.0 L-372.8 522.0 L-370.3 531.8 L89.1 531.8 L90.1 517.6 L137.1 517.6 L139.1 522.0 L141.1 522.0 L143.6 531.8 L603.0 531.8 L604.0 517.6 L651.0 517.6 L653.0 522.0 L655.0 522.0 L657.5 531.8 L1116.9 531.8 L1117.9 517.6 L1164.9 517.6 L1166.9 522.0 L1168.9 522.0 L1171.4 531.8 L1630.8 531.8 L1631.8 517.6 L1678.8 517.6 L1680.8 522.0 L1682.8 522.0 L1685.3 531.8 L2144.7 531.8 L2145.7 517.6 L2192.7 517.6 L2194.7 522.0 L2196.7 522.0 L2199.2 531.8 L2658.6 531.8 L2659.6 517.6 L2706.6 517.6 L2708.6 522.0 L2710.6 522.0 L2713.1 531.8 L3071.0 531.8" fill="none" stroke="#00ffff" stroke-width="2.6" stroke-linejoin="miter" />
</g>
<path d="M2173.5 424.7 H2218.5 V472 L2196.0 481.6 L2173.5 472 Z" fill="#ffff00"/><path d="M2181.5 432.7 H2210.5 M2196.0 432.7 V473" stroke="#222" stroke-width="1.8" fill="none"/>
<rect x="118.8" y="669.4" width="3100" height="1170.9" fill="#2a2f30" stroke="#209b8a" stroke-width="7.2"/>
<path d="M448.8 692.8h7.2 M448.8 716.2h7.2 M448.8 739.6h7.2 M448.8 763.0h7.2 M448.8 809.8h7.2 M448.8 833.2h7.2 M448.8 856.6h7.2 M448.8 880.0h7.2 M448.8 926.8h7.2 M448.8 950.2h7.2 M448.8 973.6h7.2 M448.8 997.0h7.2 M448.8 1043.8h7.2 M448.8 1067.2h7.2 M448.8 1090.6h7.2 M448.8 1114.0h7.2 M448.8 1160.8h7.2 M448.8 1184.2h7.2 M448.8 1207.6h7.2 M448.8 1231.0h7.2 M448.8 1277.8h7.2 M448.8 1301.2h7.2 M448.8 1324.6h7.2 M448.8 1348.0h7.2 M448.8 1394.8h7.2 M448.8 1418.2h7.2 M448.8 1441.6h7.2 M448.8 1465.0h7.2 M448.8 1511.8h7.2 M448.8 1535.2h7.2 M448.8 1558.6h7.2 M448.8 1582.0h7.2 M448.8 1628.8h7.2 M448.8 1652.2h7.2 M448.8 1675.6h7.2 M448.8 1699.0h7.2 M448.8 1745.8h7.2 M448.8 1769.2h7.2 M448.8 1792.6h7.2 M448.8 1816.0h7.2 M783.2 692.8h7.2 M783.2 716.2h7.2 M783.2 739.6h7.2 M783.2 763.0h7.2 M783.2 809.8h7.2 M783.2 833.2h7.2 M783.2 856.6h7.2 M783.2 880.0h7.2 M783.2 926.8h7.2 M783.2 950.2h7.2 M783.2 973.6h7.2 M783.2 997.0h7.2 M783.2 1043.8h7.2 M783.2 1067.2h7.2 M783.2 1090.6h7.2 M783.2 1114.0h7.2 M783.2 1160.8h7.2 M783.2 1184.2h7.2 M783.2 1207.6h7.2 M783.2 1231.0h7.2 M783.2 1277.8h7.2 M783.2 1301.2h7.2 M783.2 1324.6h7.2 M783.2 1348.0h7.2 M783.2 1394.8h7.2 M783.2 1418.2h7.2 M783.2 1441.6h7.2 M783.2 1465.0h7.2 M783.2 1511.8h7.2 M783.2 1535.2h7.2 M783.2 1558.6h7.2 M783.2 1582.0h7.2 M783.2 1628.8h7.2 M783.2 1652.2h7.2 M783.2 1675.6h7.2 M783.2 1699.0h7.2 M783.2 1745.8h7.2 M783.2 1769.2h7.2 M783.2 1792.6h7.2 M783.2 1816.0h7.2 M1117.7 692.8h7.2 M1117.7 716.2h7.2 M1117.7 739.6h7.2 M1117.7 763.0h7.2 M1117.7 809.8h7.2 M1117.7 833.2h7.2 M1117.7 856.6h7.2 M1117.7 880.0h7.2 M1117.7 926.8h7.2 M1117.7 950.2h7.2 M1117.7 973.6h7.2 M1117.7 997.0h7.2 M1117.7 1043.8h7.2 M1117.7 1067.2h7.2 M1117.7 1090.6h7.2 M1117.7 1114.0h7.2 M1117.7 1160.8h7.2 M1117.7 1184.2h7.2 M1117.7 1207.6h7.2 M1117.7 1231.0h7.2 M1117.7 1277.8h7.2 M1117.7 1301.2h7.2 M1117.7 1324.6h7.2 M1117.7 1348.0h7.2 M1117.7 1394.8h7.2 M1117.7 1418.2h7.2 M1117.7 1441.6h7.2 M1117.7 1465.0h7.2 M1117.7 1511.8h7.2 M1117.7 1535.2h7.2 M1117.7 1558.6h7.2 M1117.7 1582.0h7.2 M1117.7 1628.8h7.2 M1117.7 1652.2h7.2 M1117.7 1675.6h7.2 M1117.7 1699.0h7.2 M1117.7 1745.8h7.2 M1117.7 1769.2h7.2 M1117.7 1792.6h7.2 M1117.7 1816.0h7.2 M1452.1 692.8h7.2 M1452.1 716.2h7.2 M1452.1 739.6h7.2 M1452.1 763.0h7.2 M1452.1 809.8h7.2 M1452.1 833.2h7.2 M1452.1 856.6h7.2 M1452.1 880.0h7.2 M1452.1 926.8h7.2 M1452.1 950.2h7.2 M1452.1 973.6h7.2 M1452.1 997.0h7.2 M1452.1 1043.8h7.2 M1452.1 1067.2h7.2 M1452.1 1090.6h7.2 M1452.1 1114.0h7.2 M1452.1 1160.8h7.2 M1452.1 1184.2h7.2 M1452.1 1207.6h7.2 M1452.1 1231.0h7.2 M1452.1 1277.8h7.2 M1452.1 1301.2h7.2 M1452.1 1324.6h7.2 M1452.1 1348.0h7.2 M1452.1 1394.8h7.2 M1452.1 1418.2h7.2 M1452.1 1441.6h7.2 M1452.1 1465.0h7.2 M1452.1 1511.8h7.2 M1452.1 1535.2h7.2 M1452.1 1558.6h7.2 M1452.1 1582.0h7.2 M1452.1 1628.8h7.2 M1452.1 1652.2h7.2 M1452.1 1675.6h7.2 M1452.1 1699.0h7.2 M1452.1 1745.8h7.2 M1452.1 1769.2h7.2 M1452.1 1792.6h7.2 M1452.1 1816.0h7.2 M1786.6 692.8h7.2 M1786.6 716.2h7.2 M1786.6 739.6h7.2 M1786.6 763.0h7.2 M1786.6 809.8h7.2 M1786.6 833.2h7.2 M1786.6 856.6h7.2 M1786.6 880.0h7.2 M1786.6 926.8h7.2 M1786.6 950.2h7.2 M1786.6 973.6h7.2 M1786.6 997.0h7.2 M1786.6 1043.8h7.2 M1786.6 1067.2h7.2 M1786.6 1090.6h7.2 M1786.6 1114.0h7.2 M1786.6 1160.8h7.2 M1786.6 1184.2h7.2 M1786.6 1207.6h7.2 M1786.6 1231.0h7.2 M1786.6 1277.8h7.2 M1786.6 1301.2h7.2 M1786.6 1324.6h7.2 M1786.6 1348.0h7.2 M1786.6 1394.8h7.2 M1786.6 1418.2h7.2 M1786.6 1441.6h7.2 M1786.6 1465.0h7.2 M1786.6 1511.8h7.2 M1786.6 1535.2h7.2 M1786.6 1558.6h7.2 M1786.6 1582.0h7.2 M1786.6 1628.8h7.2 M1786.6 1652.2h7.2 M1786.6 1675.6h7.2 M1786.6 1699.0h7.2 M1786.6 1745.8h7.2 M1786.6 1769.2h7.2 M1786.6 1792.6h7.2 M1786.6 1816.0h7.2 M2121.0 692.8h7.2 M2121.0 716.2h7.2 M2121.0 739.6h7.2 M2121.0 763.0h7.2 M2121.0 809.8h7.2 M2121.0 833.2h7.2 M2121.0 856.6h7.2 M2121.0 880.0h7.2 M2121.0 926.8h7.2 M2121.0 950.2h7.2 M2121.0 973.6h7.2 M2121.0 997.0h7.2 M2121.0 1043.8h7.2 M2121.0 1067.2h7.2 M2121.0 1090.6h7.2 M2121.0 1114.0h7.2 M2121.0 1160.8h7.2 M2121.0 1184.2h7.2 M2121.0 1207.6h7.2 M2121.0 1231.0h7.2 M2121.0 1277.8h7.2 M2121.0 1301.2h7.2 M2121.0 1324.6h7.2 M2121.0 1348.0h7.2 M2121.0 1394.8h7.2 M2121.0 1418.2h7.2 M2121.0 1441.6h7.2 M2121.0 1465.0h7.2 M2121.0 1511.8h7.2 M2121.0 1535.2h7.2 M2121.0 1558.6h7.2 M2121.0 1582.0h7.2 M2121.0 1628.8h7.2 M2121.0 1652.2h7.2 M2121.0 1675.6h7.2 M2121.0 1699.0h7.2 M2121.0 1745.8h7.2 M2121.0 1769.2h7.2 M2121.0 1792.6h7.2 M2121.0 1816.0h7.2 M2455.5 692.8h7.2 M2455.5 716.2h7.2 M2455.5 739.6h7.2 M2455.5 763.0h7.2 M2455.5 809.8h7.2 M2455.5 833.2h7.2 M2455.5 856.6h7.2 M2455.5 880.0h7.2 M2455.5 926.8h7.2 M2455.5 950.2h7.2 M2455.5 973.6h7.2 M2455.5 997.0h7.2 M2455.5 1043.8h7.2 M2455.5 1067.2h7.2 M2455.5 1090.6h7.2 M2455.5 1114.0h7.2 M2455.5 1160.8h7.2 M2455.5 1184.2h7.2 M2455.5 1207.6h7.2 M2455.5 1231.0h7.2 M2455.5 1277.8h7.2 M2455.5 1301.2h7.2 M2455.5 1324.6h7.2 M2455.5 1348.0h7.2 M2455.5 1394.8h7.2 M2455.5 1418.2h7.2 M2455.5 1441.6h7.2 M2455.5 1465.0h7.2 M2455.5 1511.8h7.2 M2455.5 1535.2h7.2 M2455.5 1558.6h7.2 M2455.5 1582.0h7.2 M2455.5 1628.8h7.2 M2455.5 1652.2h7.2 M2455.5 1675.6h7.2 M2455.5 1699.0h7.2 M2455.5 1745.8h7.2 M2455.5 1769.2h7.2 M2455.5 1792.6h7.2 M2455.5 1816.0h7.2 M2789.9 692.8h7.2 M2789.9 716.2h7.2 M2789.9 739.6h7.2 M2789.9 763.0h7.2 M2789.9 809.8h7.2 M2789.9 833.2h7.2 M2789.9 856.6h7.2 M2789.9 880.0h7.2 M2789.9 926.8h7.2 M2789.9 950.2h7.2 M2789.9 973.6h7.2 M2789.9 997.0h7.2 M2789.9 1043.8h7.2 M2789.9 1067.2h7.2 M2789.9 1090.6h7.2 M2789.9 1114.0h7.2 M2789.9 1160.8h7.2 M2789.9 1184.2h7.2 M2789.9 1207.6h7.2 M2789.9 1231.0h7.2 M2789.9 1277.8h7.2 M2789.9 1301.2h7.2 M2789.9 1324.6h7.2 M2789.9 1348.0h7.2 M2789.9 1394.8h7.2 M2789.9 1418.2h7.2 M2789.9 1441.6h7.2 M2789.9 1465.0h7.2 M2789.9 1511.8h7.2 M2789.9 1535.2h7.2 M2789.9 1558.6h7.2 M2789.9 1582.0h7.2 M2789.9 1628.8h7.2 M2789.9 1652.2h7.2 M2789.9 1675.6h7.2 M2789.9 1699.0h7.2 M2789.9 1745.8h7.2 M2789.9 1769.2h7.2 M2789.9 1792.6h7.2 M2789.9 1816.0h7.2 M184.8 782.8v7.2 M251.7 782.8v7.2 M318.6 782.8v7.2 M385.5 782.8v7.2 M519.2 782.8v7.2 M586.1 782.8v7.2 M653.0 782.8v7.2 M719.9 782.8v7.2 M853.7 782.8v7.2 M920.6 782.8v7.2 M987.5 782.8v7.2 M1054.4 782.8v7.2 M1188.1 782.8v7.2 M1255.0 782.8v7.2 M1321.9 782.8v7.2 M1388.8 782.8v7.2 M1522.6 782.8v7.2 M1589.5 782.8v7.2 M1656.4 782.8v7.2 M1723.3 782.8v7.2 M1857.0 782.8v7.2 M1923.9 782.8v7.2 M1990.8 782.8v7.2 M2057.7 782.8v7.2 M2191.5 782.8v7.2 M2258.4 782.8v7.2 M2325.3 782.8v7.2 M2392.2 782.8v7.2 M2525.9 782.8v7.2 M2592.8 782.8v7.2 M2659.7 782.8v7.2 M2726.6 782.8v7.2 M2860.4 782.8v7.2 M2927.3 782.8v7.2 M2994.2 782.8v7.2 M3061.1 782.8v7.2 M184.8 899.8v7.2 M251.7 899.8v7.2 M318.6 899.8v7.2 M385.5 899.8v7.2 M519.2 899.8v7.2 M586.1 899.8v7.2 M653.0 899.8v7.2 M719.9 899.8v7.2 M853.7 899.8v7.2 M920.6 899.8v7.2 M987.5 899.8v7.2 M1054.4 899.8v7.2 M1188.1 899.8v7.2 M1255.0 899.8v7.2 M1321.9 899.8v7.2 M1388.8 899.8v7.2 M1522.6 899.8v7.2 M1589.5 899.8v7.2 M1656.4 899.8v7.2 M1723.3 899.8v7.2 M1857.0 899.8v7.2 M1923.9 899.8v7.2 M1990.8 899.8v7.2 M2057.7 899.8v7.2 M2191.5 899.8v7.2 M2258.4 899.8v7.2 M2325.3 899.8v7.2 M2392.2 899.8v7.2 M2525.9 899.8v7.2 M2592.8 899.8v7.2 M2659.7 899.8v7.2 M2726.6 899.8v7.2 M2860.4 899.8v7.2 M2927.3 899.8v7.2 M2994.2 899.8v7.2 M3061.1 899.8v7.2 M184.8 1016.8v7.2 M251.7 1016.8v7.2 M318.6 1016.8v7.2 M385.5 1016.8v7.2 M519.2 1016.8v7.2 M586.1 1016.8v7.2 M653.0 1016.8v7.2 M719.9 1016.8v7.2 M853.7 1016.8v7.2 M920.6 1016.8v7.2 M987.5 1016.8v7.2 M1054.4 1016.8v7.2 M1188.1 1016.8v7.2 M1255.0 1016.8v7.2 M1321.9 1016.8v7.2 M1388.8 1016.8v7.2 M1522.6 1016.8v7.2 M1589.5 1016.8v7.2 M1656.4 1016.8v7.2 M1723.3 1016.8v7.2 M1857.0 1016.8v7.2 M1923.9 1016.8v7.2 M1990.8 1016.8v7.2 M2057.7 1016.8v7.2 M2191.5 1016.8v7.2 M2258.4 1016.8v7.2 M2325.3 1016.8v7.2 M2392.2 1016.8v7.2 M2525.9 1016.8v7.2 M2592.8 1016.8v7.2 M2659.7 1016.8v7.2 M2726.6 1016.8v7.2 M2860.4 1016.8v7.2 M2927.3 1016.8v7.2 M2994.2 1016.8v7.2 M3061.1 1016.8v7.2 M184.8 1133.8v7.2 M251.7 1133.8v7.2 M318.6 1133.8v7.2 M385.5 1133.8v7.2 M519.2 1133.8v7.2 M586.1 1133.8v7.2 M653.0 1133.8v7.2 M719.9 1133.8v7.2 M853.7 1133.8v7.2 M920.6 1133.8v7.2 M987.5 1133.8v7.2 M1054.4 1133.8v7.2 M1188.1 1133.8v7.2 M1255.0 1133.8v7.2 M1321.9 1133.8v7.2 M1388.8 1133.8v7.2 M1522.6 1133.8v7.2 M1589.5 1133.8v7.2 M1656.4 1133.8v7.2 M1723.3 1133.8v7.2 M1857.0 1133.8v7.2 M1923.9 1133.8v7.2 M1990.8 1133.8v7.2 M2057.7 1133.8v7.2 M2191.5 1133.8v7.2 M2258.4 1133.8v7.2 M2325.3 1133.8v7.2 M2392.2 1133.8v7.2 M2525.9 1133.8v7.2 M2592.8 1133.8v7.2 M2659.7 1133.8v7.2 M2726.6 1133.8v7.2 M2860.4 1133.8v7.2 M2927.3 1133.8v7.2 M2994.2 1133.8v7.2 M3061.1 1133.8v7.2 M184.8 1250.8v7.2 M251.7 1250.8v7.2 M318.6 1250.8v7.2 M385.5 1250.8v7.2 M519.2 1250.8v7.2 M586.1 1250.8v7.2 M653.0 1250.8v7.2 M719.9 1250.8v7.2 M853.7 1250.8v7.2 M920.6 1250.8v7.2 M987.5 1250.8v7.2 M1054.4 1250.8v7.2 M1188.1 1250.8v7.2 M1255.0 1250.8v7.2 M1321.9 1250.8v7.2 M1388.8 1250.8v7.2 M1522.6 1250.8v7.2 M1589.5 1250.8v7.2 M1656.4 1250.8v7.2 M1723.3 1250.8v7.2 M1857.0 1250.8v7.2 M1923.9 1250.8v7.2 M1990.8 1250.8v7.2 M2057.7 1250.8v7.2 M2191.5 1250.8v7.2 M2258.4 1250.8v7.2 M2325.3 1250.8v7.2 M2392.2 1250.8v7.2 M2525.9 1250.8v7.2 M2592.8 1250.8v7.2 M2659.7 1250.8v7.2 M2726.6 1250.8v7.2 M2860.4 1250.8v7.2 M2927.3 1250.8v7.2 M2994.2 1250.8v7.2 M3061.1 1250.8v7.2 M184.8 1367.8v7.2 M251.7 1367.8v7.2 M318.6 1367.8v7.2 M385.5 1367.8v7.2 M519.2 1367.8v7.2 M586.1 1367.8v7.2 M653.0 1367.8v7.2 M719.9 1367.8v7.2 M853.7 1367.8v7.2 M920.6 1367.8v7.2 M987.5 1367.8v7.2 M1054.4 1367.8v7.2 M1188.1 1367.8v7.2 M1255.0 1367.8v7.2 M1321.9 1367.8v7.2 M1388.8 1367.8v7.2 M1522.6 1367.8v7.2 M1589.5 1367.8v7.2 M1656.4 1367.8v7.2 M1723.3 1367.8v7.2 M1857.0 1367.8v7.2 M1923.9 1367.8v7.2 M1990.8 1367.8v7.2 M2057.7 1367.8v7.2 M2191.5 1367.8v7.2 M2258.4 1367.8v7.2 M2325.3 1367.8v7.2 M2392.2 1367.8v7.2 M2525.9 1367.8v7.2 M2592.8 1367.8v7.2 M2659.7 1367.8v7.2 M2726.6 1367.8v7.2 M2860.4 1367.8v7.2 M2927.3 1367.8v7.2 M2994.2 1367.8v7.2 M3061.1 1367.8v7.2 M184.8 1484.8v7.2 M251.7 1484.8v7.2 M318.6 1484.8v7.2 M385.5 1484.8v7.2 M519.2 1484.8v7.2 M586.1 1484.8v7.2 M653.0 1484.8v7.2 M719.9 1484.8v7.2 M853.7 1484.8v7.2 M920.6 1484.8v7.2 M987.5 1484.8v7.2 M1054.4 1484.8v7.2 M1188.1 1484.8v7.2 M1255.0 1484.8v7.2 M1321.9 1484.8v7.2 M1388.8 1484.8v7.2 M1522.6 1484.8v7.2 M1589.5 1484.8v7.2 M1656.4 1484.8v7.2 M1723.3 1484.8v7.2 M1857.0 1484.8v7.2 M1923.9 1484.8v7.2 M1990.8 1484.8v7.2 M2057.7 1484.8v7.2 M2191.5 1484.8v7.2 M2258.4 1484.8v7.2 M2325.3 1484.8v7.2 M2392.2 1484.8v7.2 M2525.9 1484.8v7.2 M2592.8 1484.8v7.2 M2659.7 1484.8v7.2 M2726.6 1484.8v7.2 M2860.4 1484.8v7.2 M2927.3 1484.8v7.2 M2994.2 1484.8v7.2 M3061.1 1484.8v7.2 M184.8 1601.8v7.2 M251.7 1601.8v7.2 M318.6 1601.8v7.2 M385.5 1601.8v7.2 M519.2 1601.8v7.2 M586.1 1601.8v7.2 M653.0 1601.8v7.2 M719.9 1601.8v7.2 M853.7 1601.8v7.2 M920.6 1601.8v7.2 M987.5 1601.8v7.2 M1054.4 1601.8v7.2 M1188.1 1601.8v7.2 M1255.0 1601.8v7.2 M1321.9 1601.8v7.2 M1388.8 1601.8v7.2 M1522.6 1601.8v7.2 M1589.5 1601.8v7.2 M1656.4 1601.8v7.2 M1723.3 1601.8v7.2 M1857.0 1601.8v7.2 M1923.9 1601.8v7.2 M1990.8 1601.8v7.2 M2057.7 1601.8v7.2 M2191.5 1601.8v7.2 M2258.4 1601.8v7.2 M2325.3 1601.8v7.2 M2392.2 1601.8v7.2 M2525.9 1601.8v7.2 M2592.8 1601.8v7.2 M2659.7 1601.8v7.2 M2726.6 1601.8v7.2 M2860.4 1601.8v7.2 M2927.3 1601.8v7.2 M2994.2 1601.8v7.2 M3061.1 1601.8v7.2 M184.8 1718.8v7.2 M251.7 1718.8v7.2 M318.6 1718.8v7.2 M385.5 1718.8v7.2 M519.2 1718.8v7.2 M586.1 1718.8v7.2 M653.0 1718.8v7.2 M719.9 1718.8v7.2 M853.7 1718.8v7.2 M920.6 1718.8v7.2 M987.5 1718.8v7.2 M1054.4 1718.8v7.2 M1188.1 1718.8v7.2 M1255.0 1718.8v7.2 M1321.9 1718.8v7.2 M1388.8 1718.8v7.2 M1522.6 1718.8v7.2 M1589.5 1718.8v7.2 M1656.4 1718.8v7.2 M1723.3 1718.8v7.2 M1857.0 1718.8v7.2 M1923.9 1718.8v7.2 M1990.8 1718.8v7.2 M2057.7 1718.8v7.2 M2191.5 1718.8v7.2 M2258.4 1718.8v7.2 M2325.3 1718.8v7.2 M2392.2 1718.8v7.2 M2525.9 1718.8v7.2 M2592.8 1718.8v7.2 M2659.7 1718.8v7.2 M2726.6 1718.8v7.2 M2860.4 1718.8v7.2 M2927.3 1718.8v7.2 M2994.2 1718.8v7.2 M3061.1 1718.8v7.2" stroke="#21a08e" stroke-width="1.9" fill="none"/>
<path d="M448.6 786.4h7.6 M452.4 782.6v7.6 M448.6 903.4h7.6 M452.4 899.6v7.6 M448.6 1020.4h7.6 M452.4 1016.6v7.6 M448.6 1137.4h7.6 M452.4 1133.6v7.6 M448.6 1371.4h7.6 M452.4 1367.6v7.6 M448.6 1488.4h7.6 M452.4 1484.6v7.6 M448.6 1605.4h7.6 M452.4 1601.6v7.6 M448.6 1722.4h7.6 M452.4 1718.6v7.6 M783.0 786.4h7.6 M786.8 782.6v7.6 M783.0 903.4h7.6 M786.8 899.6v7.6 M783.0 1020.4h7.6 M786.8 1016.6v7.6 M783.0 1137.4h7.6 M786.8 1133.6v7.6 M783.0 1371.4h7.6 M786.8 1367.6v7.6 M783.0 1488.4h7.6 M786.8 1484.6v7.6 M783.0 1605.4h7.6 M786.8 1601.6v7.6 M783.0 1722.4h7.6 M786.8 1718.6v7.6 M1117.5 786.4h7.6 M1121.2 782.6v7.6 M1117.5 903.4h7.6 M1121.2 899.6v7.6 M1117.5 1020.4h7.6 M1121.2 1016.6v7.6 M1117.5 1137.4h7.6 M1121.2 1133.6v7.6 M1117.5 1371.4h7.6 M1121.2 1367.6v7.6 M1117.5 1488.4h7.6 M1121.2 1484.6v7.6 M1117.5 1605.4h7.6 M1121.2 1601.6v7.6 M1117.5 1722.4h7.6 M1121.2 1718.6v7.6 M1451.9 786.4h7.6 M1455.7 782.6v7.6 M1451.9 903.4h7.6 M1455.7 899.6v7.6 M1451.9 1020.4h7.6 M1455.7 1016.6v7.6 M1451.9 1137.4h7.6 M1455.7 1133.6v7.6 M1451.9 1371.4h7.6 M1455.7 1367.6v7.6 M1451.9 1488.4h7.6 M1455.7 1484.6v7.6 M1451.9 1605.4h7.6 M1455.7 1601.6v7.6 M1451.9 1722.4h7.6 M1455.7 1718.6v7.6 M2120.8 786.4h7.6 M2124.6 782.6v7.6 M2120.8 903.4h7.6 M2124.6 899.6v7.6 M2120.8 1020.4h7.6 M2124.6 1016.6v7.6 M2120.8 1137.4h7.6 M2124.6 1133.6v7.6 M2120.8 1371.4h7.6 M2124.6 1367.6v7.6 M2120.8 1488.4h7.6 M2124.6 1484.6v7.6 M2120.8 1605.4h7.6 M2124.6 1601.6v7.6 M2120.8 1722.4h7.6 M2124.6 1718.6v7.6 M2455.2 786.4h7.6 M2459.1 782.6v7.6 M2455.2 903.4h7.6 M2459.1 899.6v7.6 M2455.2 1020.4h7.6 M2459.1 1016.6v7.6 M2455.2 1137.4h7.6 M2459.1 1133.6v7.6 M2455.2 1371.4h7.6 M2459.1 1367.6v7.6 M2455.2 1488.4h7.6 M2459.1 1484.6v7.6 M2455.2 1605.4h7.6 M2459.1 1601.6v7.6 M2455.2 1722.4h7.6 M2459.1 1718.6v7.6 M2789.7 786.4h7.6 M2793.5 782.6v7.6 M2789.7 903.4h7.6 M2793.5 899.6v7.6 M2789.7 1020.4h7.6 M2793.5 1016.6v7.6 M2789.7 1137.4h7.6 M2793.5 1133.6v7.6 M2789.7 1371.4h7.6 M2793.5 1367.6v7.6 M2789.7 1488.4h7.6 M2793.5 1484.6v7.6 M2789.7 1605.4h7.6 M2793.5 1601.6v7.6 M2789.7 1722.4h7.6 M2793.5 1718.6v7.6 M3124.1 786.4h7.6 M3127.9 782.6v7.6 M3124.1 903.4h7.6 M3127.9 899.6v7.6 M3124.1 1020.4h7.6 M3127.9 1016.6v7.6 M3124.1 1137.4h7.6 M3127.9 1133.6v7.6 M3124.1 1371.4h7.6 M3127.9 1367.6v7.6 M3124.1 1488.4h7.6 M3127.9 1484.6v7.6 M3124.1 1605.4h7.6 M3127.9 1601.6v7.6 M3124.1 1722.4h7.6 M3127.9 1718.6v7.6" stroke="#21a08e" stroke-width="2.2" fill="none"/>
<path d="M446.4 1254.4h12 M452.4 1248.4v12 M780.8 1254.4h12 M786.8 1248.4v12 M1115.2 1254.4h12 M1121.2 1248.4v12 M1449.7 1254.4h12 M1455.7 1248.4v12 M1784.2 786.4h12 M1790.2 780.4v12 M1784.2 903.4h12 M1790.2 897.4v12 M1784.2 1020.4h12 M1790.2 1014.4v12 M1784.2 1137.4h12 M1790.2 1131.4v12 M1784.2 1254.4h12 M1790.2 1248.4v12 M1784.2 1371.4h12 M1790.2 1365.4v12 M1784.2 1488.4h12 M1790.2 1482.4v12 M1784.2 1605.4h12 M1790.2 1599.4v12 M1784.2 1722.4h12 M1790.2 1716.4v12 M2118.6 1254.4h12 M2124.6 1248.4v12 M2453.1 1254.4h12 M2459.1 1248.4v12 M2787.5 1254.4h12 M2793.5 1248.4v12 M3121.9 1254.4h12 M3127.9 1248.4v12" stroke="#21a08e" stroke-width="1.8" fill="none"/>
<path d="M764.7 614.5 H809.7 V660.8 L787.2 670.8 L764.7 660.8 Z" fill="#ffff00"/><path d="M772.7 622.5 H801.7 M787.2 622.5 V661.8" stroke="#222" stroke-width="1.8" fill="none"/>
<path d="M121.5 1304.0 L122.3 1292.0 L122.8 1282.0 L123.6 1270.4 L124.0 1270.4 L133.8 1270.4 L136.4 1264.2 L137.0 1264.2 L139.6 1270.4 L177.9 1270.4 L180.5 1264.2 L181.1 1264.2 L183.7 1270.4 L193.5 1270.4 L196.1 1264.2 L196.7 1264.2 L199.3 1270.4 L207.6 1270.4 L210.2 1264.2 L210.8 1264.2 L213.4 1270.4 L272.0 1270.4 L274.6 1264.2 L275.2 1264.2 L277.8 1270.4 L361.7 1270.4 L364.3 1264.2 L364.9 1264.2 L367.5 1270.4 L408.3 1270.4 L410.9 1264.2 L411.5 1264.2 L414.1 1270.4 L422.1 1270.4 L424.7 1264.2 L425.3 1264.2 L427.9 1270.4 L427.5 1270.4 L430.1 1264.2 L430.7 1264.2 L433.3 1270.4 L445.6 1270.4 L448.2 1264.2 L448.8 1264.2 L451.4 1270.4 L475.2 1270.4 L477.8 1264.2 L478.4 1264.2 L481.0 1270.4 L552.6 1270.4 L555.2 1264.2 L558.8 1264.2 L561.4 1270.4 L609.4 1270.4 L612.0 1264.2 L615.5 1264.2 L618.1 1270.4 L659.7 1270.4 L662.3 1264.2 L662.9 1264.2 L665.5 1270.4 L675.2 1270.4 L677.8 1264.2 L678.4 1264.2 L681.0 1270.4 L704.1 1270.4 L706.7 1264.2 L707.3 1264.2 L709.9 1270.4 L718.6 1270.4 L721.2 1264.2 L721.8 1264.2 L724.4 1270.4 L752.3 1270.4 L754.9 1264.2 L755.5 1264.2 L758.1 1270.4 L765.6 1270.4 L768.2 1264.2 L768.8 1264.2 L771.4 1270.4 L789.3 1270.4 L790.0 1285.0 L791.0 1300.2 L801.0 1300.2 L803.0 1305.8 L806.0 1305.8 L808.0 1300.2 L828.7 1300.2 L830.1 1278.8 L832.1 1251.2 L833.0 1242.0 L834.5 1239.0 L841.8 1239.0 L844.0 1232.0 L849.0 1232.0 L851.2 1239.0 L853.0 1239.0 L855.2 1232.0 L857.7 1232.0 L859.9 1239.0 L871.1 1239.0 L873.3 1232.0 L873.3 1232.0 L875.5 1239.0 L876.3 1239.0 L878.5 1232.0 L883.5 1232.0 L885.7 1239.0 L896.0 1239.0 L898.2 1232.0 L898.2 1232.0 L900.4 1239.0 L907.9 1239.0 L910.1 1232.0 L912.6 1232.0 L914.8 1239.0 L924.4 1239.0 L926.6 1232.0 L926.6 1232.0 L928.8 1239.0 L940.2 1239.0 L942.4 1232.0 L942.4 1232.0 L944.6 1239.0 L945.5 1239.0 L947.7 1232.0 L947.7 1232.0 L949.9 1239.0 L960.9 1239.0 L963.1 1232.0 L964.1 1232.0 L966.3 1239.0 L968.3 1239.0 L970.5 1232.0 L975.5 1232.0 L977.7 1239.0 L978.8 1239.0 L981.0 1232.0 L981.0 1232.0 L983.2 1239.0 L997.0 1239.0 L997.9 1263.5 L999.1 1291.0 L999.6 1300.2 L1007.7 1300.2 L1009.7 1305.8 L1012.7 1305.8 L1014.7 1300.2 L1028.7 1300.2 L1030.7 1305.8 L1031.5 1305.8 L1033.5 1300.2 L1034.5 1300.2 L1036.5 1305.8 L1037.3 1305.8 L1039.3 1300.2 L1040.8 1300.2 L1042.8 1305.8 L1042.8 1305.8 L1044.8 1300.2 L1046.8 1300.2 L1048.8 1305.8 L1050.3 1305.8 L1052.3 1300.2 L1052.9 1300.2 L1054.9 1305.8 L1054.9 1305.8 L1056.9 1300.2 L1059.0 1300.2 L1061.0 1305.8 L1061.0 1305.8 L1063.0 1300.2 L1065.1 1300.2 L1067.1 1305.8 L1068.6 1305.8 L1070.6 1300.2 L1072.2 1300.2 L1074.2 1305.8 L1074.2 1305.8 L1076.2 1300.2 L1083.4 1300.2 L1085.4 1305.8 L1085.4 1305.8 L1087.4 1300.2 L1088.0 1300.2 L1090.0 1305.8 L1091.5 1305.8 L1093.5 1300.2 L1098.9 1300.2 L1100.9 1305.8 L1100.9 1305.8 L1102.9 1300.2 L1103.5 1300.2 L1105.5 1305.8 L1107.0 1305.8 L1109.0 1300.2 L1115.2 1300.2 L1117.2 1305.8 L1120.2 1305.8 L1122.2 1300.2 L1123.6 1300.2 L1125.6 1305.8 L1125.6 1305.8 L1127.6 1300.2 L1128.8 1300.2 L1130.8 1305.8 L1132.3 1305.8 L1134.3 1300.2 L1135.2 1300.2 L1137.2 1305.8 L1138.0 1305.8 L1140.0 1300.2 L1160.0 1300.2 L1160.8 1215.0 L1162.2 1100.0 L1163.4 1010.0 L1164.4 930.0 L1166.0 915.0 L1169.0 905.0 L1176.0 898.7 L1247.2 898.7 L1249.7 892.2 L1250.3 892.2 L1252.8 898.7 L1300.8 898.7 L1303.3 892.2 L1303.9 892.2 L1306.4 898.7 L1327.0 898.7 L1328.2 1080.0 L1330.2 1265.0 L1332.0 1283.0 L1335.0 1293.0 L1340.0 1300.2 L1351.5 1300.2 L1353.5 1305.8 L1353.5 1305.8 L1355.5 1300.2 L1356.8 1300.2 L1358.8 1305.8 L1361.8 1305.8 L1363.8 1300.2 L1364.5 1300.2 L1366.5 1305.8 L1366.5 1305.8 L1368.5 1300.2 L1369.5 1300.2 L1371.5 1305.8 L1374.5 1305.8 L1376.5 1300.2 L1377.6 1300.2 L1379.6 1305.8 L1379.6 1305.8 L1381.6 1300.2 L1382.5 1300.2 L1384.5 1305.8 L1384.5 1305.8 L1386.5 1300.2 L1387.7 1300.2 L1389.7 1305.8 L1392.7 1305.8 L1394.7 1300.2 L1396.9 1300.2 L1398.9 1305.8 L1400.4 1305.8 L1402.4 1300.2 L1408.0 1300.2 L1410.0 1305.8 L1411.5 1305.8 L1413.5 1300.2 L1414.3 1300.2 L1416.3 1305.8 L1416.3 1305.8 L1418.3 1300.2 L1425.3 1300.2 L1427.3 1305.8 L1427.3 1305.8 L1429.3 1300.2 L1430.9 1300.2 L1432.9 1305.8 L1435.9 1305.8 L1437.9 1300.2 L1440.1 1300.2 L1442.1 1305.8 L1443.6 1305.8 L1445.6 1300.2 L1446.8 1300.2 L1448.8 1305.8 L1448.8 1305.8 L1450.8 1300.2 L1452.2 1300.2 L1454.2 1305.8 L1455.0 1305.8 L1457.0 1300.2 L1458.8 1300.2 L1460.8 1305.8 L1461.6 1305.8 L1463.6 1300.2 L1465.6 1300.2 L1467.6 1305.8 L1469.1 1305.8 L1471.1 1300.2 L1472.0 1300.2 L1474.0 1305.8 L1474.0 1305.8 L1476.0 1300.2 L1477.4 1300.2 L1479.4 1305.8 L1482.4 1305.8 L1484.4 1300.2 L1492.5 1300.2 L1494.5 1267.7 L1497.0 1226.0 L1498.5 1210.4 L1500.0 1207.4 L1653.8 1207.4 L1656.2 1201.9 L1656.8 1201.9 L1659.2 1207.4 L1659.0 1207.4 L1660.9 1244.5 L1663.2 1286.3 L1664.3 1300.2 L1679.4 1300.2 L1681.4 1305.8 L1681.4 1305.8 L1683.4 1300.2 L1688.2 1300.2 L1690.2 1305.8 L1691.7 1305.8 L1693.7 1300.2 L1694.4 1300.2 L1696.4 1305.8 L1696.4 1305.8 L1698.4 1300.2 L1699.9 1300.2 L1701.9 1305.8 L1701.9 1305.8 L1703.9 1300.2 L1704.7 1300.2 L1706.7 1305.8 L1708.2 1305.8 L1710.2 1300.2 L1722.1 1300.2 L1724.1 1305.8 L1727.1 1305.8 L1729.1 1300.2 L1729.9 1300.2 L1731.9 1305.8 L1731.9 1305.8 L1733.9 1300.2 L1743.6 1300.2 L1745.6 1305.8 L1746.4 1305.8 L1748.4 1300.2 L1750.5 1300.2 L1752.5 1305.8 L1752.5 1305.8 L1754.5 1300.2 L1755.3 1300.2 L1757.3 1305.8 L1757.3 1305.8 L1759.3 1300.2 L1760.4 1300.2 L1762.4 1305.8 L1762.4 1305.8 L1764.4 1300.2 L1765.8 1300.2 L1767.8 1305.8 L1767.8 1305.8 L1769.8 1300.2 L1782.7 1300.2 L1784.7 1305.8 L1784.7 1305.8 L1786.7 1300.2 L1801.7 1300.2 L1803.7 1305.8 L1804.5 1305.8 L1806.5 1300.2 L1807.8 1300.2 L1809.8 1305.8 L1809.8 1305.8 L1811.8 1300.2 L1827.0 1300.2 L1828.7 1266.2 L1830.8 1222.4 L1832.0 1206.0 L1833.5 1203.0 L1842.5 1203.0 L1844.7 1196.0 L1847.2 1196.0 L1849.4 1203.0 L1859.0 1203.0 L1861.2 1196.0 L1863.7 1196.0 L1865.9 1203.0 L1866.5 1203.0 L1868.7 1196.0 L1868.7 1196.0 L1870.9 1203.0 L1872.5 1203.0 L1874.7 1196.0 L1875.7 1196.0 L1877.9 1203.0 L1888.5 1203.0 L1890.7 1196.0 L1893.2 1196.0 L1895.4 1203.0 L1905.6 1203.0 L1907.8 1196.0 L1910.3 1196.0 L1912.5 1203.0 L1914.5 1203.0 L1916.7 1196.0 L1916.7 1196.0 L1918.9 1203.0 L1927.5 1203.0 L1929.7 1196.0 L1930.7 1196.0 L1932.9 1203.0 L1941.2 1203.0 L1943.4 1196.0 L1943.4 1196.0 L1945.6 1203.0 L1950.6 1203.0 L1952.8 1196.0 L1957.8 1196.0 L1960.0 1203.0 L1968.4 1203.0 L1970.6 1196.0 L1970.6 1196.0 L1972.8 1203.0 L1973.6 1203.0 L1975.8 1196.0 L1980.8 1196.0 L1983.0 1203.0 L1983.9 1203.0 L1986.1 1196.0 L1987.1 1196.0 L1989.3 1203.0 L1995.0 1203.0 L1996.1 1241.9 L1997.6 1285.6 L1998.2 1300.2 L2013.0 1300.2 L2015.0 1305.8 L2015.8 1305.8 L2017.8 1300.2 L2018.8 1300.2 L2020.8 1305.8 L2022.3 1305.8 L2024.3 1300.2 L2037.4 1300.2 L2039.4 1305.8 L2039.4 1305.8 L2041.4 1300.2 L2050.0 1300.2 L2052.0 1305.8 L2055.0 1305.8 L2057.0 1300.2 L2063.5 1300.2 L2065.5 1305.8 L2065.5 1305.8 L2067.5 1300.2 L2069.4 1300.2 L2071.4 1305.8 L2071.4 1305.8 L2073.4 1300.2 L2075.6 1300.2 L2077.6 1305.8 L2078.4 1305.8 L2080.4 1300.2 L2085.7 1300.2 L2087.7 1305.8 L2089.2 1305.8 L2091.2 1300.2 L2092.2 1300.2 L2094.2 1305.8 L2095.7 1305.8 L2097.7 1300.2 L2099.1 1300.2 L2101.1 1305.8 L2101.9 1305.8 L2103.9 1300.2 L2105.8 1300.2 L2107.8 1305.8 L2110.8 1305.8 L2112.8 1300.2 L2113.6 1300.2 L2115.6 1305.8 L2115.6 1305.8 L2117.6 1300.2 L2119.1 1300.2 L2121.1 1305.8 L2121.9 1305.8 L2123.9 1300.2 L2125.0 1300.2 L2127.0 1305.8 L2130.0 1305.8 L2132.0 1300.2 L2132.8 1300.2 L2134.8 1305.8 L2136.3 1305.8 L2138.3 1300.2 L2140.2 1300.2 L2142.2 1305.8 L2143.0 1305.8 L2145.0 1300.2 L2145.8 1300.2 L2147.8 1305.8 L2147.8 1305.8 L2149.8 1300.2 L2155.2 1300.2 L2157.2 1305.8 L2157.2 1305.8 L2159.2 1300.2 L2165.0 1300.2 L2167.2 1259.2 L2170.2 1206.6 L2172.0 1186.2 L2173.5 1183.2 L2211.3 1183.2 L2213.7 1189.2 L2214.3 1189.2 L2216.7 1183.2 L2332.4 1183.2 L2334.0 1230.0 L2336.1 1282.7 L2337.0 1300.2 L2350.9 1300.2 L2352.9 1305.8 L2352.9 1305.8 L2354.9 1300.2 L2355.8 1300.2 L2357.8 1305.8 L2359.3 1305.8 L2361.3 1300.2 L2363.0 1300.2 L2365.0 1305.8 L2366.5 1305.8 L2368.5 1300.2 L2369.2 1300.2 L2371.2 1305.8 L2371.2 1305.8 L2373.2 1300.2 L2374.4 1300.2 L2376.4 1305.8 L2379.4 1305.8 L2381.4 1300.2 L2383.5 1300.2 L2385.5 1305.8 L2385.5 1305.8 L2387.5 1300.2 L2389.4 1300.2 L2391.4 1305.8 L2391.4 1305.8 L2393.4 1300.2 L2395.5 1300.2 L2397.5 1305.8 L2399.0 1305.8 L2401.0 1300.2 L2402.3 1300.2 L2404.3 1305.8 L2404.3 1305.8 L2406.3 1300.2 L2407.8 1300.2 L2409.8 1305.8 L2412.8 1305.8 L2414.8 1300.2 L2430.2 1300.2 L2432.2 1305.8 L2433.7 1305.8 L2435.7 1300.2 L2437.8 1300.2 L2439.8 1305.8 L2439.8 1305.8 L2441.8 1300.2 L2443.8 1300.2 L2445.8 1305.8 L2445.8 1305.8 L2447.8 1300.2 L2449.8 1300.2 L2451.8 1305.8 L2451.8 1305.8 L2453.8 1300.2 L2464.2 1300.2 L2466.2 1305.8 L2467.0 1305.8 L2469.0 1300.2 L2470.8 1300.2 L2472.8 1305.8 L2472.8 1305.8 L2474.8 1300.2 L2475.5 1300.2 L2477.5 1305.8 L2479.0 1305.8 L2481.0 1300.2 L2482.3 1300.2 L2484.3 1305.8 L2485.1 1305.8 L2487.1 1300.2 L2487.7 1300.2 L2489.7 1305.8 L2489.7 1305.8 L2491.7 1300.2 L2500.0 1300.2 L2501.3 1259.3 L2503.2 1206.7 L2504.0 1186.3 L2505.5 1183.3 L2513.2 1183.3 L2515.4 1176.3 L2522.4 1176.3 L2524.6 1183.3 L2529.8 1183.3 L2532.0 1176.3 L2532.0 1176.3 L2534.2 1183.3 L2546.3 1183.3 L2548.5 1176.3 L2553.5 1176.3 L2555.7 1183.3 L2565.9 1183.3 L2568.1 1176.3 L2570.6 1176.3 L2572.8 1183.3 L2583.0 1183.3 L2585.2 1176.3 L2585.2 1176.3 L2587.4 1183.3 L2588.9 1183.3 L2591.1 1176.3 L2598.1 1176.3 L2600.3 1183.3 L2605.8 1183.3 L2608.0 1176.3 L2613.0 1176.3 L2615.2 1183.3 L2624.3 1183.3 L2626.5 1176.3 L2627.5 1176.3 L2629.7 1183.3 L2642.2 1183.3 L2644.4 1176.3 L2649.4 1176.3 L2651.6 1183.3 L2662.6 1183.3 L2665.5 1230.1 L2669.3 1282.7 L2671.0 1300.2 L2681.8 1300.2 L2683.8 1305.8 L2686.8 1305.8 L2688.8 1300.2 L2690.0 1300.2 L2692.0 1305.8 L2692.0 1305.8 L2694.0 1300.2 L2695.6 1300.2 L2697.6 1305.8 L2697.6 1305.8 L2699.6 1300.2 L2700.3 1300.2 L2702.3 1305.8 L2703.8 1305.8 L2705.8 1300.2 L2707.9 1300.2 L2709.9 1305.8 L2709.9 1305.8 L2711.9 1300.2 L2713.7 1300.2 L2715.7 1305.8 L2715.7 1305.8 L2717.7 1300.2 L2727.2 1300.2 L2729.2 1305.8 L2730.7 1305.8 L2732.7 1300.2 L2734.0 1300.2 L2736.0 1305.8 L2736.0 1305.8 L2738.0 1300.2 L2740.1 1300.2 L2742.1 1305.8 L2743.6 1305.8 L2745.6 1300.2 L2746.3 1300.2 L2748.3 1305.8 L2749.8 1305.8 L2751.8 1300.2 L2753.9 1300.2 L2755.9 1305.8 L2755.9 1305.8 L2757.9 1300.2 L2760.1 1300.2 L2762.1 1305.8 L2762.1 1305.8 L2764.1 1300.2 L2765.0 1300.2 L2767.0 1305.8 L2767.8 1305.8 L2769.8 1300.2 L2771.0 1300.2 L2773.0 1305.8 L2776.0 1305.8 L2778.0 1300.2 L2779.4 1300.2 L2781.4 1305.8 L2784.4 1305.8 L2786.4 1300.2 L2787.8 1300.2 L2789.8 1305.8 L2790.6 1305.8 L2792.6 1300.2 L2794.3 1300.2 L2796.3 1305.8 L2797.8 1305.8 L2799.8 1300.2 L2801.5 1300.2 L2803.5 1305.8 L2806.5 1305.8 L2808.5 1300.2 L2809.9 1300.2 L2811.9 1305.8 L2814.9 1305.8 L2816.9 1300.2 L2818.4 1300.2 L2820.4 1305.8 L2823.4 1305.8 L2825.4 1300.2 L2830.0 1300.2 L2832.2 1257.4 L2835.2 1202.3 L2837.0 1180.8 L2838.5 1177.8 L2854.3 1177.8 L2856.7 1182.3 L2857.3 1182.3 L2859.7 1177.8 L2866.3 1177.8 L2868.7 1182.3 L2869.3 1182.3 L2871.7 1177.8 L2902.8 1177.8 L2905.2 1182.3 L2905.8 1182.3 L2908.2 1177.8 L2937.3 1177.8 L2939.7 1182.3 L2940.3 1182.3 L2942.7 1177.8 L2998.6 1177.8 L2999.7 1226.8 L3001.0 1281.8 L3001.6 1300.2 L3023.0 1300.2 L3025.1 1305.8 L3025.9 1305.8 L3028.0 1300.2 L3038.4 1300.2 L3040.5 1305.8 L3041.3 1305.8 L3043.4 1300.2 L3051.7 1300.2 L3053.8 1305.8 L3053.8 1305.8 L3055.9 1300.2 L3066.0 1300.2" fill="none" stroke="#ffff00" stroke-width="2.0" stroke-linejoin="miter" />
<path d="M120.5 1665.0 L121.3 1600.0 L122.0 1560.0 L122.8 1464.4 L151.0 1464.4 L153.0 1480.6 L160.0 1480.6 L162.0 1464.4 L163.2 1464.4 L165.2 1480.6 L166.2 1480.6 L168.2 1464.4 L182.6 1464.4 L184.6 1480.6 L206.6 1480.6 L208.6 1464.4 L218.6 1464.4 L220.6 1480.6 L227.6 1480.6 L229.6 1464.4 L236.0 1464.4 L238.0 1480.6 L238.0 1480.6 L240.0 1464.4 L241.2 1464.4 L243.2 1480.6 L265.2 1480.6 L267.2 1464.4 L275.5 1464.4 L277.5 1480.6 L280.5 1480.6 L282.5 1464.4 L283.6 1464.4 L285.6 1480.6 L292.6 1480.6 L294.6 1464.4 L316.7 1464.4 L318.7 1480.6 L319.7 1480.6 L321.7 1464.4 L322.3 1464.4 L324.3 1480.6 L327.3 1480.6 L329.3 1464.4 L331.4 1464.4 L333.4 1480.6 L334.4 1480.6 L336.4 1464.4 L337.3 1464.4 L339.3 1480.6 L339.3 1480.6 L341.3 1464.4 L342.1 1464.4 L344.1 1480.6 L344.6 1480.6 L346.6 1464.4 L354.5 1464.4 L356.5 1480.6 L356.5 1480.6 L358.5 1464.4 L360.2 1464.4 L362.2 1480.6 L362.2 1480.6 L364.2 1464.4 L376.8 1464.4 L378.8 1480.6 L379.8 1480.6 L381.8 1464.4 L382.9 1464.4 L384.9 1480.6 L384.9 1480.6 L386.9 1464.4 L387.5 1464.4 L389.5 1480.6 L396.5 1480.6 L398.5 1464.4 L399.5 1464.4 L401.5 1480.6 L402.5 1480.6 L404.5 1464.4 L406.2 1464.4 L408.2 1480.6 L409.2 1480.6 L411.2 1464.4 L429.3 1464.4 L431.3 1480.6 L431.3 1480.6 L433.3 1464.4 L434.0 1464.4 L436.0 1480.6 L436.0 1480.6 L438.0 1464.4 L458.1 1464.4 L460.1 1480.6 L482.1 1480.6 L484.1 1464.4 L508.9 1464.4 L510.9 1480.6 L513.9 1480.6 L515.9 1464.4 L517.3 1464.4 L519.3 1480.6 L519.8 1480.6 L521.8 1464.4 L532.9 1464.4 L534.9 1480.6 L534.9 1480.6 L536.9 1464.4 L558.5 1464.4 L560.5 1480.6 L582.5 1480.6 L584.5 1464.4 L593.1 1464.4 L595.1 1480.6 L595.6 1480.6 L597.6 1464.4 L617.5 1464.4 L619.5 1480.6 L641.5 1480.6 L643.5 1464.4 L644.4 1464.4 L646.4 1480.6 L646.4 1480.6 L648.4 1464.4 L655.8 1464.4 L657.8 1480.6 L658.3 1480.6 L660.3 1464.4 L661.1 1464.4 L663.1 1480.6 L663.6 1480.6 L665.6 1464.4 L689.7 1464.4 L691.7 1480.6 L691.7 1480.6 L693.7 1464.4 L695.8 1464.4 L697.8 1480.6 L704.8 1480.6 L706.8 1464.4 L707.7 1464.4 L709.7 1480.6 L710.7 1480.6 L712.7 1464.4 L714.2 1464.4 L716.2 1480.6 L717.2 1480.6 L719.2 1464.4 L720.6 1464.4 L722.6 1480.6 L722.6 1480.6 L724.6 1464.4 L745.8 1464.4 L747.8 1480.6 L750.8 1480.6 L752.8 1464.4 L754.4 1464.4 L756.4 1480.6 L763.4 1480.6 L765.4 1464.4 L766.7 1464.4 L768.7 1480.6 L771.7 1480.6 L773.7 1464.4 L774.6 1464.4 L776.6 1480.6 L777.6 1480.6 L779.6 1464.4 L780.6 1464.4 L782.6 1480.6 L783.1 1480.6 L785.1 1464.4 L789.0 1464.4 L789.6 1500.0 L790.6 1590.0 L792.0 1664.5 L842.4 1664.5 L844.7 1648.2 L845.3 1648.2 L847.6 1664.5 L920.4 1664.5 L922.7 1648.2 L923.3 1648.2 L925.6 1664.5 L943.4 1664.5 L945.7 1648.2 L946.3 1648.2 L948.6 1664.5 L954.4 1664.5 L956.7 1648.2 L957.3 1648.2 L959.6 1664.5 L964.4 1664.5 L966.7 1648.2 L967.3 1648.2 L969.6 1664.5 L1006.9 1664.5 L1009.2 1648.2 L1009.8 1648.2 L1012.1 1664.5 L1016.0 1664.5 L1018.3 1648.2 L1018.9 1648.2 L1021.2 1664.5 L1026.4 1664.5 L1028.7 1648.2 L1029.3 1648.2 L1031.6 1664.5 L1034.1 1664.5 L1036.4 1648.2 L1037.0 1648.2 L1039.3 1664.5 L1046.4 1664.5 L1048.7 1648.2 L1049.3 1648.2 L1051.6 1664.5 L1057.4 1664.5 L1059.7 1648.2 L1060.3 1648.2 L1062.6 1664.5 L1090.9 1664.5 L1093.2 1648.2 L1093.8 1648.2 L1096.1 1664.5 L1144.4 1664.5 L1146.7 1648.2 L1147.3 1648.2 L1149.6 1664.5 L1170.0 1664.5 L1172.2 1648.2 L1175.8 1648.2 L1178.0 1664.5 L1196.8 1664.5 L1199.1 1648.2 L1199.7 1648.2 L1202.0 1664.5 L1218.4 1664.5 L1220.7 1648.2 L1221.3 1648.2 L1223.6 1664.5 L1223.9 1664.5 L1226.2 1648.2 L1226.8 1648.2 L1229.1 1664.5 L1296.4 1664.5 L1298.7 1648.2 L1299.3 1648.2 L1301.6 1664.5 L1368.4 1664.5 L1370.7 1648.2 L1371.3 1648.2 L1373.6 1664.5 L1374.0 1664.5 L1376.3 1648.2 L1376.9 1648.2 L1379.2 1664.5 L1414.9 1664.5 L1417.2 1648.2 L1417.8 1648.2 L1420.1 1664.5 L1471.4 1664.5 L1473.7 1648.2 L1474.3 1648.2 L1476.6 1664.5 L1480.4 1664.5 L1482.7 1648.2 L1483.3 1648.2 L1485.6 1664.5 L1515.1 1664.5 L1517.4 1648.2 L1518.0 1648.2 L1520.3 1664.5 L1574.4 1664.5 L1576.7 1648.2 L1577.3 1648.2 L1579.6 1664.5 L1582.4 1664.5 L1584.7 1648.2 L1585.3 1648.2 L1587.6 1664.5 L1589.6 1664.5 L1591.9 1648.2 L1592.5 1648.2 L1594.8 1664.5 L1618.6 1664.5 L1620.9 1648.2 L1621.5 1648.2 L1623.8 1664.5 L1654.0 1664.5 L1656.3 1648.2 L1656.9 1648.2 L1659.2 1664.5 L1671.0 1664.5 L1673.3 1648.2 L1673.9 1648.2 L1676.2 1664.5 L1684.7 1664.5 L1687.0 1648.2 L1687.6 1648.2 L1689.9 1664.5 L1705.4 1664.5 L1707.7 1648.2 L1708.3 1648.2 L1710.6 1664.5 L1724.5 1664.5 L1726.8 1648.2 L1727.4 1648.2 L1729.7 1664.5 L1737.9 1664.5 L1740.2 1648.2 L1740.8 1648.2 L1743.1 1664.5 L1768.6 1664.5 L1770.9 1648.2 L1771.5 1648.2 L1773.8 1664.5 L1781.3 1664.5 L1783.6 1648.2 L1784.2 1648.2 L1786.5 1664.5 L1786.7 1664.5 L1789.0 1648.2 L1789.6 1648.2 L1791.9 1664.5 L1794.7 1664.5 L1797.0 1648.2 L1797.6 1648.2 L1799.9 1664.5 L1804.8 1664.5 L1807.1 1648.2 L1807.7 1648.2 L1810.0 1664.5 L1812.0 1664.5 L1814.3 1648.2 L1814.9 1648.2 L1817.2 1664.5 L1827.2 1664.5 L1829.5 1648.2 L1830.1 1648.2 L1832.4 1664.5 L1848.9 1664.5 L1851.2 1648.2 L1851.8 1648.2 L1854.1 1664.5 L1882.2 1664.5 L1884.5 1648.2 L1888.0 1648.2 L1890.3 1664.5 L1898.8 1664.5 L1901.1 1648.2 L1901.7 1648.2 L1904.0 1664.5 L1952.4 1664.5 L1954.7 1648.2 L1955.3 1648.2 L1957.6 1664.5 L1984.9 1664.5 L1987.2 1648.2 L1990.7 1648.2 L1993.0 1664.5 L2076.1 1664.5 L2078.4 1648.2 L2079.0 1648.2 L2081.3 1664.5 L2086.9 1664.5 L2089.2 1648.2 L2089.8 1648.2 L2092.1 1664.5 L2099.6 1664.5 L2101.9 1648.2 L2102.5 1648.2 L2104.8 1664.5 L2119.5 1664.5 L2121.8 1648.2 L2122.4 1648.2 L2124.7 1664.5 L2156.4 1664.5 L2158.7 1648.2 L2159.3 1648.2 L2161.6 1664.5 L2197.2 1664.5 L2199.5 1648.2 L2200.1 1648.2 L2202.4 1664.5 L2202.6 1664.5 L2204.9 1648.2 L2205.5 1648.2 L2207.8 1664.5 L2215.7 1664.5 L2218.0 1648.2 L2221.5 1648.2 L2223.8 1664.5 L2246.0 1664.5 L2248.3 1648.2 L2248.9 1648.2 L2251.2 1664.5 L2279.1 1664.5 L2281.4 1648.2 L2282.0 1648.2 L2284.3 1664.5 L2279.7 1664.5 L2282.0 1648.2 L2282.6 1648.2 L2284.9 1664.5 L2316.4 1664.5 L2318.7 1648.2 L2319.3 1648.2 L2321.6 1664.5 L2343.2 1664.5 L2345.5 1648.2 L2346.1 1648.2 L2348.4 1664.5 L2373.3 1664.5 L2375.6 1648.2 L2376.2 1648.2 L2378.5 1664.5 L2416.3 1664.5 L2418.6 1648.2 L2422.1 1648.2 L2424.4 1664.5 L2446.4 1664.5 L2448.7 1648.2 L2449.3 1648.2 L2451.6 1664.5 L2455.8 1664.5 L2458.1 1648.2 L2458.7 1648.2 L2461.0 1664.5 L2597.0 1664.5 L2599.3 1648.2 L2599.9 1648.2 L2602.2 1664.5 L2744.4 1664.5 L2746.7 1648.2 L2747.3 1648.2 L2749.6 1664.5 L2767.2 1664.5 L2769.5 1648.2 L2770.1 1648.2 L2772.4 1664.5 L2847.6 1664.5 L2849.9 1648.2 L2850.5 1648.2 L2852.8 1664.5 L2948.2 1664.5 L2950.5 1648.2 L2951.1 1648.2 L2953.4 1664.5 L2958.3 1664.5 L2960.6 1648.2 L2964.1 1648.2 L2966.4 1664.5 L2988.0 1664.5 L2990.3 1648.2 L2993.8 1648.2 L2996.1 1664.5 L3017.7 1664.5 L3020.0 1648.2 L3020.6 1648.2 L3022.9 1664.5 L3057.5 1664.5 L3059.8 1648.2 L3060.4 1648.2 L3062.7 1664.5 L3066.0 1664.5" fill="none" stroke="#00ffff" stroke-width="2.0" stroke-linejoin="miter" />
<path d="M6.5 1274 H92 L121.5 1304.5 L92 1335 H6.5 Z" fill="#ffff00"/>
<path d="M6.5 1620.7 H92 L121.5 1651.2 L92 1681.7 H6.5 Z" fill="#00ffff"/>
<rect x="-20" y="1859" width="523.7" height="185.5" fill="none" stroke="#228c80" stroke-width="2"/>
<rect x="-20" y="1871" width="511" height="161" fill="#2a2f30"/>
<rect x="522" y="1859" width="523.7" height="185.5" fill="none" stroke="#228c80" stroke-width="2"/>
<rect x="534.5" y="1871" width="498.5" height="161" fill="#2a2f30"/>
<path d="M0 2074.5 H3061 M0 2207 H3061" stroke="#228c80" stroke-width="2"/>
<rect x="-5" y="2086.6" width="3071" height="108" fill="#2a2f30"/>
</svg>
<span class="t " style="left:-27.64px;top:340.80px;font-size:48px;color:#ffff00;font-family:'Liberation Serif',serif;transform:scaleX(1.0000);">Run</span>
<span class="t " style="left:9.00px;top:1284.20px;font-size:40px;color:#45453a;font-family:'Liberation Serif',serif;transform:scaleX(0.9921);">CH1</span>
<span class="t " style="left:8.00px;top:1630.30px;font-size:40px;color:#3a4545;font-family:'Liberation Serif',serif;transform:scaleX(1.0185);">CH2</span>
<span class="t " style="left:-9.72px;top:1871.20px;font-size:48px;color:#ffff00;font-family:'Liberation Serif',serif;transform:scaleX(1.0000);">CH1</span>
<span class="t " style="left:318.00px;top:1871.20px;font-size:48px;color:#ffff00;font-family:'Liberation Serif',serif;transform:scaleX(0.9919);">X10  DC</span>
<span class="t " style="left:350.60px;top:1922.40px;font-size:48px;color:#ffff00;font-family:'Liberation Serif',serif;transform:scaleX(0.9648);">1 V/div</span>
<span class="t " style="left:256.00px;top:1974.60px;font-size:48px;color:#ffff00;font-family:'Liberation Serif',serif;transform:scaleX(1.0088);">-423.08 mV</span>
<span class="t " style="left:536.00px;top:1871.20px;font-size:48px;color:#00ffff;font-family:'Liberation Serif',serif;transform:scaleX(0.9700);">CH2</span>
<span class="t " style="left:859.00px;top:1871.20px;font-size:48px;color:#00ffff;font-family:'Liberation Serif',serif;transform:scaleX(0.9977);">X10  DC</span>
<span class="t " style="left:887.60px;top:1922.40px;font-size:48px;color:#00ffff;font-family:'Liberation Serif',serif;transform:scaleX(0.9994);">2 V/div</span>
<span class="t " style="left:884.00px;top:1974.60px;font-size:48px;color:#00ffff;font-family:'Liberation Serif',serif;transform:scaleX(0.9945);">-6.77 V</span>
<span class="t " style="left:-3.40px;top:2087.00px;font-size:48px;color:#ffff00;font-family:'Liberation Serif',serif;transform:scaleX(1.0000);">Vmin= -22.616 mV</span>
<span class="t " style="left:493.00px;top:2087.00px;font-size:48px;color:#ffff00;font-family:'Liberation Serif',serif;transform:scaleX(0.9994);">Vmax= 3.482 V</span>
<span class="t " style="left:990.00px;top:2087.00px;font-size:48px;color:#ffff00;font-family:'Liberation Serif',serif;transform:scaleX(1.0090);">Vpp= 3.505 V</span>
<span class="t " style="left:1486.60px;top:2087.00px;font-size:48px;color:#ffff00;font-family:'Liberation Serif',serif;transform:scaleX(1.0189);">Vrms= 1.116 V</span>
<span class="t " style="left:1985.00px;top:2087.00px;font-size:48px;color:#ffff00;font-family:'Liberation Serif',serif;transform:scaleX(1.0287);">F= 149.988 Hz</span>
<span class="t " style="left:-4.40px;top:2139.70px;font-size:48px;color:#00ffff;font-family:'Liberation Serif',serif;transform:scaleX(1.0000);">Vmin= -233.434 mV</span>
<span class="t " style="left:493.00px;top:2139.70px;font-size:48px;color:#00ffff;font-family:'Liberation Serif',serif;transform:scaleX(0.9994);">Vmax= 3.181 V</span>
<span class="t " style="left:990.00px;top:2139.70px;font-size:48px;color:#00ffff;font-family:'Liberation Serif',serif;transform:scaleX(1.0090);">Vpp= 3.414 V</span>
<span class="t " style="left:1486.60px;top:2139.70px;font-size:48px;color:#00ffff;font-family:'Liberation Serif',serif;transform:scaleX(1.0237);">F= 0.000 Hz</span>
<span class="t " style="left:320.00px;top:1105.46px;font-size:74px;color:#ffff00;font-family:'Liberation Sans',sans-serif;transform:scaleX(0.9222);">OUT</span>
<span class="t " style="left:287.00px;top:1539.56px;font-size:74px;color:#00a2e8;font-family:'Liberation Sans',sans-serif;transform:scaleX(0.8051);">RESET</span>
<span class="t" style="left:464px;top:1097.5px;font-size:84px;color:#ffff00;font-weight:300;font-family:'Liberation Sans','Noto Sans CJK SC',sans-serif">信</span>
<span class="t" style="left:548px;top:1097.5px;font-size:84px;color:#ffff00;font-weight:300;font-family:'Liberation Sans','Noto Sans CJK SC',sans-serif">号</span>
<span class="t" style="left:485px;top:1531px;font-size:84px;color:#00a2e8;font-weight:300;font-family:'Liberation Sans','Noto Sans CJK SC',sans-serif">信</span>
<span class="t" style="left:569px;top:1531px;font-size:84px;color:#00a2e8;font-weight:300;font-family:'Liberation Sans','Noto Sans CJK SC',sans-serif">号</span>
<span class="t " style="left:856.00px;top:1352.00px;font-size:56px;color:#ffffff;font-family:'Liberation Sans',sans-serif;transform:scaleX(0.9712);">63Hz</span>
<span class="t " style="left:1174.00px;top:1356.00px;font-size:56px;color:#ffffff;font-family:'Liberation Sans',sans-serif;transform:scaleX(0.9639);">160Hz</span>
<span class="t " style="left:1509.60px;top:1357.70px;font-size:56px;color:#ffffff;font-family:'Liberation Sans',sans-serif;transform:scaleX(0.9787);">400Hz</span>
<span class="t " style="left:1860.00px;top:1358.50px;font-size:56px;color:#ffffff;font-family:'Liberation Sans',sans-serif;transform:scaleX(0.9597);">1kHz</span>
<span class="t " style="left:2169.40px;top:1357.40px;font-size:56px;color:#ffffff;font-family:'Liberation Sans',sans-serif;transform:scaleX(0.9816);">2.5kHz</span>
<span class="t " style="left:2490.00px;top:1359.70px;font-size:56px;color:#ffffff;font-family:'Liberation Sans',sans-serif;transform:scaleX(0.9933);">6.25kHz</span>
<span class="t " style="left:2850.70px;top:1356.80px;font-size:56px;color:#ffffff;font-family:'Liberation Sans',sans-serif;transform:scaleX(0.9700);">16kHz</span>
<div class="a" style="left:0;top:2218.5px;width:3061px;height:2.2px;background:linear-gradient(#c89048,#fdb85a)"></div>
<div class="a" style="left:0;top:2220.5px;width:3061px;height:16px;background:linear-gradient(#ededed,#fafafa 40%,#fff)"></div>
<div class="a" style="left:0;top:2231.4px;width:3061px;height:1.8px;background:#5f8ac6"></div>
<div class="a" style="left:0;top:2235px;width:3061px;height:61px;background:linear-gradient(#e4eefc 0,#dbe8fb 20%,#b5cff5 23%,#b9d2f6 50%,#cbdef9 100%)"></div>
<div class="a" style="left:2907px;top:2236px;width:1.6px;height:60px;background:#9db6da;box-shadow:1.6px 0 0 #eef4fd"></div>
<span class="t " style="left:-47.88px;top:2246.51px;font-size:38.5px;color:#1e4aa0;font-family:'Liberation Sans',sans-serif;transform:scaleX(0.9300);">Ready</span>
<span class="t " style="left:2917.00px;top:2246.81px;font-size:38.5px;color:#1e4aa0;font-family:'Liberation Sans',sans-serif;transform:scaleX(0.9300);">ISDS205A</span>
</body></html>
